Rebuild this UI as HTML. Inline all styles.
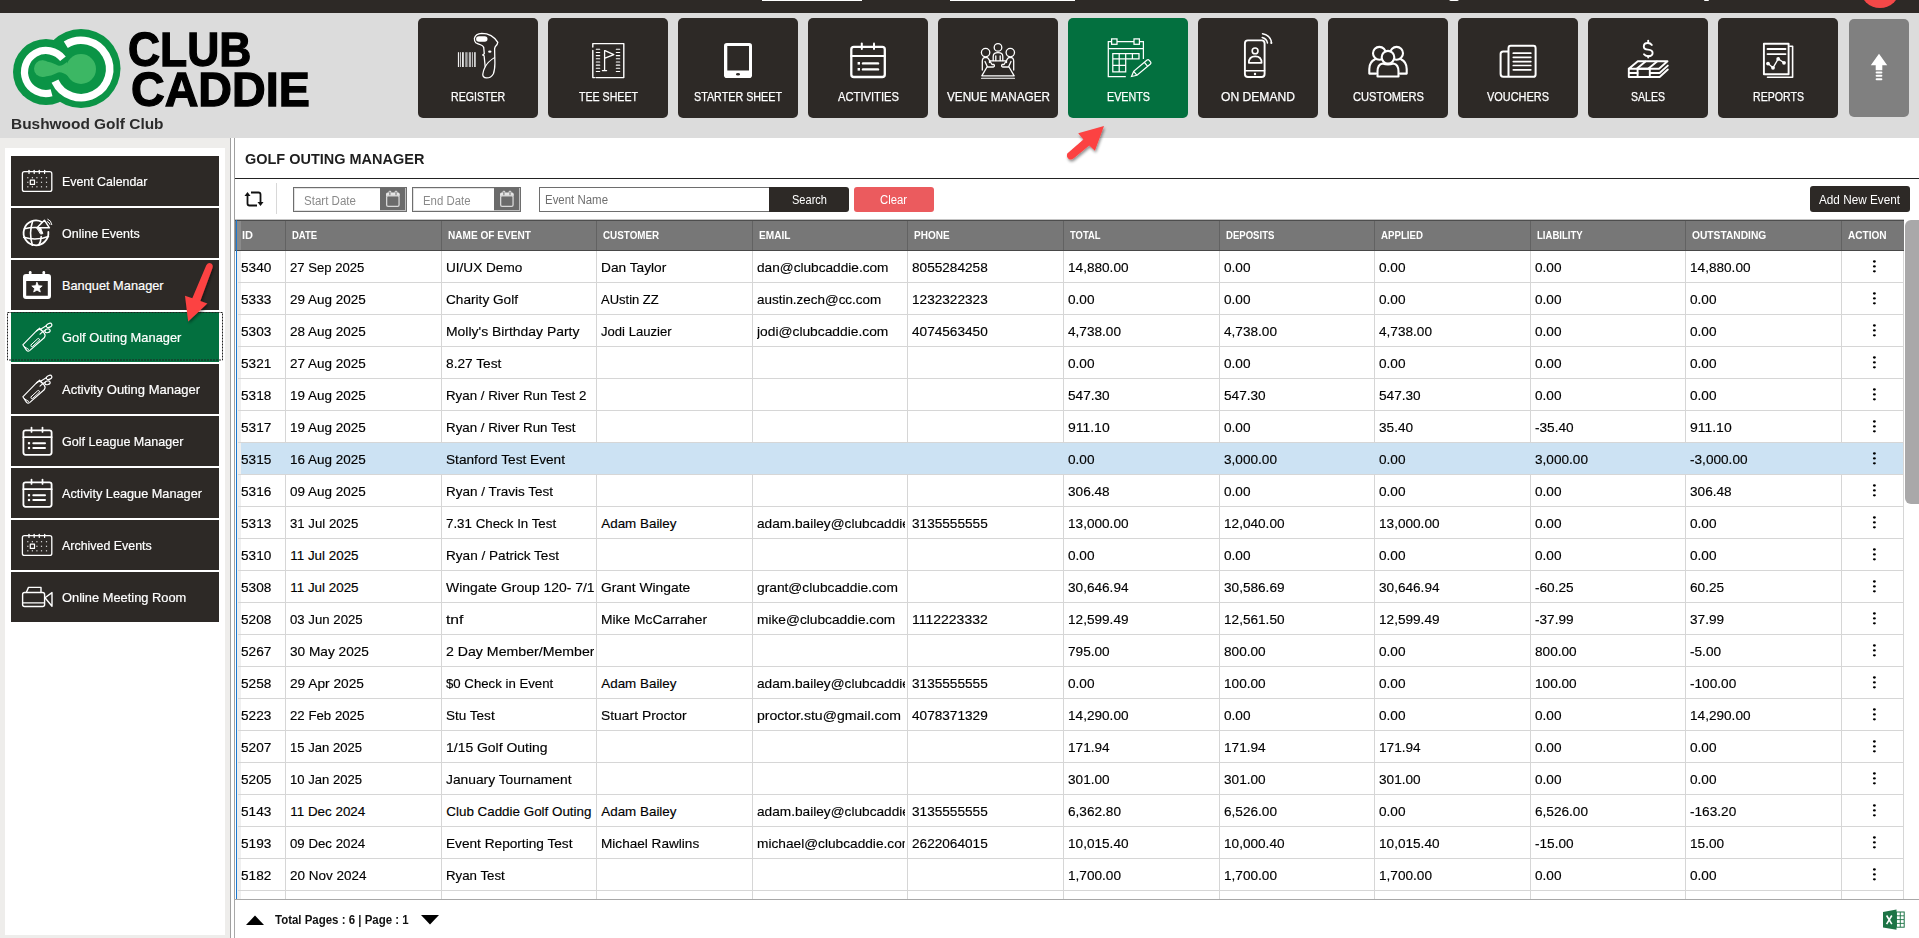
<!DOCTYPE html><html><head><meta charset="utf-8"><style>
html,body{margin:0;padding:0;width:1919px;height:938px;overflow:hidden;background:#fff;font-family:"Liberation Sans",sans-serif}
.r{position:absolute;box-sizing:border-box}
.t{position:absolute;white-space:nowrap;line-height:1;transform-origin:0 0}
</style></head><body>
<div class="r" style="left:0;top:0;width:1919px;height:13px;background:#2d2926"></div>
<div class="r" style="left:762px;top:0;width:100px;height:1px;background:#fff"></div>
<div class="r" style="left:950px;top:0;width:125px;height:1px;background:#fff"></div>
<div class="r" style="left:1449px;top:-1px;width:10px;height:2.2px;background:#fff;border-radius:0 0 4px 4px"></div>
<div class="r" style="left:1703.5px;top:-1px;width:5.5px;height:2.2px;background:#fff;border-radius:0 0 1px 1px"></div>
<div class="r" style="left:1860px;top:-32px;width:40px;height:40px;background:#f44848;border-radius:50%"></div>
<div class="r" style="left:0;top:13px;width:1919px;height:125px;background:#dcdcdc"></div>
<svg class="r" style="left:0;top:20px" width="130" height="95" viewBox="0 20 130 95">
<circle cx="46" cy="72" r="33" fill="#0b9446"/><circle cx="81" cy="68.5" r="39.5" fill="#0b9446"/>
<path d="M62.94 58.76 A21.5 21.5 0 1 0 51.56 92.77" fill="none" stroke="#fff" stroke-width="7.2"/>
<path d="M65.79 44.66 A28.7 28.7 0 1 1 54.99 81.13" fill="none" stroke="#fff" stroke-width="7.6"/>
<circle cx="81" cy="69" r="15" fill="#3cb764"/><circle cx="42.3" cy="68.6" r="8.3" fill="#3cb764"/>
<path d="M42 60.5 Q52 62 58 65.5 Q62 66.5 67 62 L68 76 Q62 71.5 58 72.5 Q52 76 42 77 Z" fill="#3cb764"/>
</svg>
<div class="t" style="left:128.20px;top:25.12px;font-size:49px;color:#000;font-weight:bold;transform:scaleX(0.9067);-webkit-text-stroke:1.3px #000;">CLUB</div>
<div class="t" style="left:130.60px;top:65.02px;font-size:49px;color:#000;font-weight:bold;transform:scaleX(0.9518);-webkit-text-stroke:1.3px #000;">CADDIE</div>
<div class="t" style="left:10.50px;top:116.30px;font-size:15px;color:#2b2b2b;font-weight:bold;transform:scaleX(1.0283);">Bushwood Golf Club</div>
<div class="r" style="left:418px;top:18px;width:120px;height:100px;background:#2d2926;border-radius:5px"></div>
<div class="t" style="left:450.85px;top:91.26px;font-size:12.8px;color:#fff;transform:scaleX(0.8299);-webkit-text-stroke:0.25px #fff;">REGISTER</div>
<div class="r" style="left:548px;top:18px;width:120px;height:100px;background:#2d2926;border-radius:5px"></div>
<div class="t" style="left:578.50px;top:91.26px;font-size:12.8px;color:#fff;transform:scaleX(0.8295);-webkit-text-stroke:0.25px #fff;">TEE SHEET</div>
<div class="r" style="left:678px;top:18px;width:120px;height:100px;background:#2d2926;border-radius:5px"></div>
<div class="t" style="left:694.00px;top:91.26px;font-size:12.8px;color:#fff;transform:scaleX(0.8398);-webkit-text-stroke:0.25px #fff;">STARTER SHEET</div>
<div class="r" style="left:808px;top:18px;width:120px;height:100px;background:#2d2926;border-radius:5px"></div>
<div class="t" style="left:837.50px;top:91.26px;font-size:12.8px;color:#fff;transform:scaleX(0.8752);-webkit-text-stroke:0.25px #fff;">ACTIVITIES</div>
<div class="r" style="left:938px;top:18px;width:120px;height:100px;background:#2d2926;border-radius:5px"></div>
<div class="t" style="left:946.50px;top:91.26px;font-size:12.8px;color:#fff;transform:scaleX(0.9165);-webkit-text-stroke:0.25px #fff;">VENUE MANAGER</div>
<div class="r" style="left:1068px;top:18px;width:120px;height:100px;background:#03703f;border-radius:5px"></div>
<div class="t" style="left:1106.50px;top:91.26px;font-size:12.8px;color:#fff;transform:scaleX(0.8396);-webkit-text-stroke:0.25px #fff;">EVENTS</div>
<div class="r" style="left:1198px;top:18px;width:120px;height:100px;background:#2d2926;border-radius:5px"></div>
<div class="t" style="left:1221.00px;top:91.26px;font-size:12.8px;color:#fff;transform:scaleX(0.9460);-webkit-text-stroke:0.25px #fff;">ON DEMAND</div>
<div class="r" style="left:1328px;top:18px;width:120px;height:100px;background:#2d2926;border-radius:5px"></div>
<div class="t" style="left:1352.50px;top:91.26px;font-size:12.8px;color:#fff;transform:scaleX(0.8706);-webkit-text-stroke:0.25px #fff;">CUSTOMERS</div>
<div class="r" style="left:1458px;top:18px;width:120px;height:100px;background:#2d2926;border-radius:5px"></div>
<div class="t" style="left:1487.00px;top:91.26px;font-size:12.8px;color:#fff;transform:scaleX(0.8546);-webkit-text-stroke:0.25px #fff;">VOUCHERS</div>
<div class="r" style="left:1588px;top:18px;width:120px;height:100px;background:#2d2926;border-radius:5px"></div>
<div class="t" style="left:1631.00px;top:91.26px;font-size:12.8px;color:#fff;transform:scaleX(0.8238);-webkit-text-stroke:0.25px #fff;">SALES</div>
<div class="r" style="left:1718px;top:18px;width:120px;height:100px;background:#2d2926;border-radius:5px"></div>
<div class="t" style="left:1752.50px;top:91.26px;font-size:12.8px;color:#fff;transform:scaleX(0.8273);-webkit-text-stroke:0.25px #fff;">REPORTS</div>
<div class="r" style="left:1849px;top:19px;width:60px;height:98px;background:#808080;border-radius:5px"></div>
<div class="r" style="left:0;top:138px;width:230px;height:800px;background:#eeedeb"></div>
<div class="r" style="left:5px;top:148px;width:220px;height:787px;background:#fff"></div>
<div class="r" style="left:11px;top:156px;width:208px;height:50px;background:#2d2926"></div>
<div class="t" style="left:61.90px;top:175.76px;font-size:12.8px;color:#fff;transform:scaleX(0.9679);-webkit-text-stroke:0.2px #fff;">Event Calendar</div>
<div class="r" style="left:11px;top:208px;width:208px;height:50px;background:#2d2926"></div>
<div class="t" style="left:61.90px;top:227.76px;font-size:12.8px;color:#fff;transform:scaleX(0.9750);-webkit-text-stroke:0.2px #fff;">Online Events</div>
<div class="r" style="left:11px;top:260px;width:208px;height:50px;background:#2d2926"></div>
<div class="t" style="left:61.90px;top:279.76px;font-size:12.8px;color:#fff;-webkit-text-stroke:0.2px #fff;">Banquet Manager</div>
<div class="r" style="left:11px;top:312px;width:208px;height:50px;background:#03703f"></div>
<div class="t" style="left:61.90px;top:331.76px;font-size:12.8px;color:#fff;transform:scaleX(1.0049);-webkit-text-stroke:0.2px #fff;">Golf Outing Manager</div>
<div class="r" style="left:11px;top:364px;width:208px;height:50px;background:#2d2926"></div>
<div class="t" style="left:61.90px;top:383.76px;font-size:12.8px;color:#fff;transform:scaleX(1.0156);-webkit-text-stroke:0.2px #fff;">Activity Outing Manager</div>
<div class="r" style="left:11px;top:416px;width:208px;height:50px;background:#2d2926"></div>
<div class="t" style="left:61.90px;top:435.76px;font-size:12.8px;color:#fff;transform:scaleX(0.9804);-webkit-text-stroke:0.2px #fff;">Golf League Manager</div>
<div class="r" style="left:11px;top:468px;width:208px;height:50px;background:#2d2926"></div>
<div class="t" style="left:61.90px;top:487.76px;font-size:12.8px;color:#fff;transform:scaleX(0.9937);-webkit-text-stroke:0.2px #fff;">Activity League Manager</div>
<div class="r" style="left:11px;top:520px;width:208px;height:50px;background:#2d2926"></div>
<div class="t" style="left:61.90px;top:539.76px;font-size:12.8px;color:#fff;transform:scaleX(0.9709);-webkit-text-stroke:0.2px #fff;">Archived Events</div>
<div class="r" style="left:11px;top:572px;width:208px;height:50px;background:#2d2926"></div>
<div class="t" style="left:61.90px;top:591.76px;font-size:12.8px;color:#fff;transform:scaleX(1.0041);-webkit-text-stroke:0.2px #fff;">Online Meeting Room</div>
<svg class="r" style="left:7px;top:312px" width="216" height="49" viewBox="0 0 216 49"><rect x="0.5" y="0.5" width="215" height="47.5" fill="none" stroke="#222" stroke-width="1" stroke-dasharray="2 1"/></svg>
<div class="r" style="left:230px;top:138px;width:5px;height:800px;border-left:1px solid #a0a0a0;border-right:1px solid #a0a0a0;background:#fff"></div>
<div class="r" style="left:235px;top:138px;width:1684px;height:800px;background:#fff"></div>
<div class="t" style="left:245.30px;top:151.80px;font-size:14.3px;color:#1e1e1e;font-weight:bold;transform:scaleX(1.0127);">GOLF OUTING MANAGER</div>
<div class="r" style="left:235px;top:178px;width:1684px;height:1px;background:#222"></div>
<div class="r" style="left:276px;top:183px;width:1px;height:31px;background:#d8d8d8"></div>
<div class="r" style="left:293px;top:187px;width:114px;height:25px;border:1px solid #6e6e6e;background:#fff"></div>
<div class="r" style="left:294px;top:188px;width:112px;height:23px;border:1px solid #e2e2e2"></div>
<div class="r" style="left:380px;top:188px;width:26px;height:23px;background:#6b6b6b;border-right:1px solid #c0c0c0;border-bottom:1px solid #c0c0c0"></div>
<svg class="r" style="left:380px;top:185px" width="26" height="26" viewBox="494 185 26 26"><path d="M500 196.2 V194.2 Q500 192.6 501.6 192.6 H512.1 Q513.7 192.6 513.7 194.2 V196.2 Z" fill="#e6e6e6"/><rect x="500.65" y="195.5" width="12.4" height="10.9" rx="1.4" fill="none" stroke="#d8d8d8" stroke-width="1.3"/><rect x="502.6" y="190.8" width="2.6" height="4.4" rx="1" fill="#e6e6e6"/><rect x="508.7" y="190.8" width="2.6" height="4.4" rx="1" fill="#e6e6e6"/><rect x="503.4" y="191.6" width="1" height="3.6" fill="#6b6b6b"/><rect x="509.5" y="191.6" width="1" height="3.6" fill="#6b6b6b"/></svg>
<div class="t" style="left:304.00px;top:195.42px;font-size:12.5px;color:#8a8a8a;transform:scaleX(0.9240);">Start Date</div>
<div class="r" style="left:412px;top:187px;width:109px;height:25px;border:1px solid #6e6e6e;background:#fff"></div>
<div class="r" style="left:413px;top:188px;width:107px;height:23px;border:1px solid #e2e2e2"></div>
<div class="r" style="left:494px;top:188px;width:26px;height:23px;background:#6b6b6b;border-right:1px solid #c0c0c0;border-bottom:1px solid #c0c0c0"></div>
<svg class="r" style="left:494px;top:185px" width="26" height="26" viewBox="494 185 26 26"><path d="M500 196.2 V194.2 Q500 192.6 501.6 192.6 H512.1 Q513.7 192.6 513.7 194.2 V196.2 Z" fill="#e6e6e6"/><rect x="500.65" y="195.5" width="12.4" height="10.9" rx="1.4" fill="none" stroke="#d8d8d8" stroke-width="1.3"/><rect x="502.6" y="190.8" width="2.6" height="4.4" rx="1" fill="#e6e6e6"/><rect x="508.7" y="190.8" width="2.6" height="4.4" rx="1" fill="#e6e6e6"/><rect x="503.4" y="191.6" width="1" height="3.6" fill="#6b6b6b"/><rect x="509.5" y="191.6" width="1" height="3.6" fill="#6b6b6b"/></svg>
<div class="t" style="left:423.00px;top:195.42px;font-size:12.5px;color:#8a8a8a;transform:scaleX(0.9114);">End Date</div>
<div class="r" style="left:539px;top:187px;width:232px;height:25px;border:1px solid #6e6e6e;background:#fff"></div>
<div class="t" style="left:545.00px;top:193.82px;font-size:12.5px;color:#6e6e6e;transform:scaleX(0.9159);">Event Name</div>
<div class="r" style="left:769px;top:187px;width:80px;height:25px;background:#2d2926;border-radius:0 3px 3px 0"></div>
<div class="t" style="left:791.50px;top:193.82px;font-size:12.5px;color:#fff;transform:scaleX(0.8837);">Search</div>
<div class="r" style="left:854px;top:187px;width:80px;height:25px;background:#eb5b5e;border-radius:3px"></div>
<div class="t" style="left:880.00px;top:193.82px;font-size:12.5px;color:#fff;transform:scaleX(0.9039);">Clear</div>
<div class="r" style="left:1810px;top:186px;width:100px;height:26px;background:#2d2926;border-radius:3px"></div>
<div class="t" style="left:1819.40px;top:193.72px;font-size:12.5px;color:#fff;transform:scaleX(0.9401);">Add New Event</div>
<svg class="r" style="left:243px;top:190px" width="22" height="18" viewBox="0 0 22 18"><path d="M4.5 5 V13.5 Q4.5 15.5 6.5 15.5 H14" fill="none" stroke="#111" stroke-width="1.8"/><path d="M17.5 13 V4.5 Q17.5 2.5 15.5 2.5 H8" fill="none" stroke="#111" stroke-width="1.8"/><path d="M1.5 6 L4.5 2 L7.5 6 Z" fill="#111"/><path d="M14.5 12 L17.5 16 L20.5 12 Z" fill="#111"/></svg>
<div class="r" style="left:235px;top:219px;width:1669px;height:1px;background:#c4c4c4"></div>
<div class="r" style="left:235px;top:220px;width:1669px;height:31px;background:#777;border-top:1px solid #4d4d4d;border-bottom:1px solid #474747"></div>
<div class="r" style="left:236px;top:220px;width:1px;height:679px;background:#1a78d2"></div>
<div class="r" style="left:237px;top:221px;width:4px;height:29px;background:#8a8a8a"></div>
<div class="r" style="left:237px;top:251px;width:4px;height:648px;background:#efefef"></div>
<div class="r" style="left:285px;top:221px;width:1px;height:29px;background:#626262"></div>
<div class="r" style="left:285px;top:251px;width:1px;height:648px;background:#d6d6d6"></div>
<div class="r" style="left:441px;top:221px;width:1px;height:29px;background:#626262"></div>
<div class="r" style="left:441px;top:251px;width:1px;height:648px;background:#d6d6d6"></div>
<div class="r" style="left:596px;top:221px;width:1px;height:29px;background:#626262"></div>
<div class="r" style="left:596px;top:251px;width:1px;height:648px;background:#d6d6d6"></div>
<div class="r" style="left:752px;top:221px;width:1px;height:29px;background:#626262"></div>
<div class="r" style="left:752px;top:251px;width:1px;height:648px;background:#d6d6d6"></div>
<div class="r" style="left:907px;top:221px;width:1px;height:29px;background:#626262"></div>
<div class="r" style="left:907px;top:251px;width:1px;height:648px;background:#d6d6d6"></div>
<div class="r" style="left:1063px;top:221px;width:1px;height:29px;background:#626262"></div>
<div class="r" style="left:1063px;top:251px;width:1px;height:648px;background:#d6d6d6"></div>
<div class="r" style="left:1219px;top:221px;width:1px;height:29px;background:#626262"></div>
<div class="r" style="left:1219px;top:251px;width:1px;height:648px;background:#d6d6d6"></div>
<div class="r" style="left:1374px;top:221px;width:1px;height:29px;background:#626262"></div>
<div class="r" style="left:1374px;top:251px;width:1px;height:648px;background:#d6d6d6"></div>
<div class="r" style="left:1530px;top:221px;width:1px;height:29px;background:#626262"></div>
<div class="r" style="left:1530px;top:251px;width:1px;height:648px;background:#d6d6d6"></div>
<div class="r" style="left:1685px;top:221px;width:1px;height:29px;background:#626262"></div>
<div class="r" style="left:1685px;top:251px;width:1px;height:648px;background:#d6d6d6"></div>
<div class="r" style="left:1841px;top:221px;width:1px;height:29px;background:#626262"></div>
<div class="r" style="left:1841px;top:251px;width:1px;height:648px;background:#d6d6d6"></div>
<div class="r" style="left:1903px;top:251px;width:1px;height:648px;background:#d6d6d6"></div>
<div class="t" style="left:242.00px;top:229.72px;font-size:11.2px;color:#fff;font-weight:bold;transform:scaleX(0.9821);">ID</div>
<div class="t" style="left:292.20px;top:229.72px;font-size:11.2px;color:#fff;font-weight:bold;transform:scaleX(0.8497);">DATE</div>
<div class="t" style="left:447.60px;top:229.72px;font-size:11.2px;color:#fff;font-weight:bold;transform:scaleX(0.9012);">NAME OF EVENT</div>
<div class="t" style="left:603.40px;top:229.72px;font-size:11.2px;color:#fff;font-weight:bold;transform:scaleX(0.8812);">CUSTOMER</div>
<div class="t" style="left:758.90px;top:229.72px;font-size:11.2px;color:#fff;font-weight:bold;transform:scaleX(0.9041);">EMAIL</div>
<div class="t" style="left:914.40px;top:229.72px;font-size:11.2px;color:#fff;font-weight:bold;transform:scaleX(0.8938);">PHONE</div>
<div class="t" style="left:1070.00px;top:229.72px;font-size:11.2px;color:#fff;font-weight:bold;transform:scaleX(0.8432);">TOTAL</div>
<div class="t" style="left:1225.70px;top:229.72px;font-size:11.2px;color:#fff;font-weight:bold;transform:scaleX(0.8546);">DEPOSITS</div>
<div class="t" style="left:1381.00px;top:229.72px;font-size:11.2px;color:#fff;font-weight:bold;transform:scaleX(0.8652);">APPLIED</div>
<div class="t" style="left:1536.70px;top:229.72px;font-size:11.2px;color:#fff;font-weight:bold;transform:scaleX(0.8560);">LIABILITY</div>
<div class="t" style="left:1692.00px;top:229.72px;font-size:11.2px;color:#fff;font-weight:bold;transform:scaleX(0.9151);">OUTSTANDING</div>
<div class="t" style="left:1847.80px;top:229.72px;font-size:11.2px;color:#fff;font-weight:bold;transform:scaleX(0.9015);">ACTION</div>
<div class="r" style="left:238px;top:282px;width:1666px;height:1px;background:#d6d6d6"></div>
<div class="r" style="left:241px;top:251px;width:42px;height:31px;overflow:hidden"><div class="t" style="left:0.00px;top:9.66px;font-size:13.4px;color:#000;transform:scaleX(1.0170);-webkit-text-stroke:0.15px #000;">5340</div></div>
<div class="r" style="left:290.3px;top:251px;width:148.7px;height:31px;overflow:hidden"><div class="t" style="left:0.00px;top:9.66px;font-size:13.4px;color:#000;transform:scaleX(0.9788);-webkit-text-stroke:0.15px #000;">27 Sep 2025</div></div>
<div class="r" style="left:446.3px;top:251px;width:147.7px;height:31px;overflow:hidden"><div class="t" style="left:0.00px;top:9.66px;font-size:13.4px;color:#000;transform:scaleX(1.0150);-webkit-text-stroke:0.15px #000;">UI/UX Demo</div></div>
<div class="r" style="left:601.3px;top:251px;width:148.70000000000005px;height:31px;overflow:hidden"><div class="t" style="left:0.00px;top:9.66px;font-size:13.4px;color:#000;transform:scaleX(1.0236);-webkit-text-stroke:0.15px #000;">Dan Taylor</div></div>
<div class="r" style="left:757.3px;top:251px;width:147.70000000000005px;height:31px;overflow:hidden"><div class="t" style="left:0.00px;top:9.66px;font-size:13.4px;color:#000;transform:scaleX(1.0195);-webkit-text-stroke:0.15px #000;">dan@clubcaddie.com</div></div>
<div class="r" style="left:912.3px;top:251px;width:148.70000000000005px;height:31px;overflow:hidden"><div class="t" style="left:0.00px;top:9.66px;font-size:13.4px;color:#000;transform:scaleX(1.0170);-webkit-text-stroke:0.15px #000;">8055284258</div></div>
<div class="r" style="left:1068.3px;top:251px;width:148.70000000000005px;height:31px;overflow:hidden"><div class="t" style="left:0.00px;top:9.66px;font-size:13.4px;color:#000;transform:scaleX(1.0159);-webkit-text-stroke:0.15px #000;">14,880.00</div></div>
<div class="r" style="left:1224.3px;top:251px;width:147.70000000000005px;height:31px;overflow:hidden"><div class="t" style="left:0.00px;top:9.66px;font-size:13.4px;color:#000;transform:scaleX(1.0163);-webkit-text-stroke:0.15px #000;">0.00</div></div>
<div class="r" style="left:1379.3px;top:251px;width:148.70000000000005px;height:31px;overflow:hidden"><div class="t" style="left:0.00px;top:9.66px;font-size:13.4px;color:#000;transform:scaleX(1.0163);-webkit-text-stroke:0.15px #000;">0.00</div></div>
<div class="r" style="left:1535.3px;top:251px;width:147.70000000000005px;height:31px;overflow:hidden"><div class="t" style="left:0.00px;top:9.66px;font-size:13.4px;color:#000;transform:scaleX(1.0163);-webkit-text-stroke:0.15px #000;">0.00</div></div>
<div class="r" style="left:1690.3px;top:251px;width:148.70000000000005px;height:31px;overflow:hidden"><div class="t" style="left:0.00px;top:9.66px;font-size:13.4px;color:#000;transform:scaleX(1.0159);-webkit-text-stroke:0.15px #000;">14,880.00</div></div>
<svg class="r" style="left:1872px;top:259px" width="5" height="15" viewBox="0 0 5 15"><ellipse cx="2.4" cy="2.5" rx="1.5" ry="1.15" fill="#000"/><ellipse cx="2.4" cy="7.4" rx="1.5" ry="1.15" fill="#000"/><ellipse cx="2.4" cy="12.3" rx="1.5" ry="1.15" fill="#000"/></svg>
<div class="r" style="left:238px;top:314px;width:1666px;height:1px;background:#d6d6d6"></div>
<div class="r" style="left:241px;top:283px;width:42px;height:31px;overflow:hidden"><div class="t" style="left:0.00px;top:9.66px;font-size:13.4px;color:#000;transform:scaleX(1.0170);-webkit-text-stroke:0.15px #000;">5333</div></div>
<div class="r" style="left:290.3px;top:283px;width:148.7px;height:31px;overflow:hidden"><div class="t" style="left:0.00px;top:9.66px;font-size:13.4px;color:#000;transform:scaleX(1.0068);-webkit-text-stroke:0.15px #000;">29 Aug 2025</div></div>
<div class="r" style="left:446.3px;top:283px;width:147.7px;height:31px;overflow:hidden"><div class="t" style="left:0.00px;top:9.66px;font-size:13.4px;color:#000;transform:scaleX(1.0188);-webkit-text-stroke:0.15px #000;">Charity Golf</div></div>
<div class="r" style="left:601.3px;top:283px;width:148.70000000000005px;height:31px;overflow:hidden"><div class="t" style="left:0.00px;top:9.66px;font-size:13.4px;color:#000;transform:scaleX(0.9696);-webkit-text-stroke:0.15px #000;">AUstin ZZ</div></div>
<div class="r" style="left:757.3px;top:283px;width:147.70000000000005px;height:31px;overflow:hidden"><div class="t" style="left:0.00px;top:9.66px;font-size:13.4px;color:#000;transform:scaleX(1.0039);-webkit-text-stroke:0.15px #000;">austin.zech@cc.com</div></div>
<div class="r" style="left:912.3px;top:283px;width:148.70000000000005px;height:31px;overflow:hidden"><div class="t" style="left:0.00px;top:9.66px;font-size:13.4px;color:#000;transform:scaleX(1.0170);-webkit-text-stroke:0.15px #000;">1232322323</div></div>
<div class="r" style="left:1068.3px;top:283px;width:148.70000000000005px;height:31px;overflow:hidden"><div class="t" style="left:0.00px;top:9.66px;font-size:13.4px;color:#000;transform:scaleX(1.0163);-webkit-text-stroke:0.15px #000;">0.00</div></div>
<div class="r" style="left:1224.3px;top:283px;width:147.70000000000005px;height:31px;overflow:hidden"><div class="t" style="left:0.00px;top:9.66px;font-size:13.4px;color:#000;transform:scaleX(1.0163);-webkit-text-stroke:0.15px #000;">0.00</div></div>
<div class="r" style="left:1379.3px;top:283px;width:148.70000000000005px;height:31px;overflow:hidden"><div class="t" style="left:0.00px;top:9.66px;font-size:13.4px;color:#000;transform:scaleX(1.0163);-webkit-text-stroke:0.15px #000;">0.00</div></div>
<div class="r" style="left:1535.3px;top:283px;width:147.70000000000005px;height:31px;overflow:hidden"><div class="t" style="left:0.00px;top:9.66px;font-size:13.4px;color:#000;transform:scaleX(1.0163);-webkit-text-stroke:0.15px #000;">0.00</div></div>
<div class="r" style="left:1690.3px;top:283px;width:148.70000000000005px;height:31px;overflow:hidden"><div class="t" style="left:0.00px;top:9.66px;font-size:13.4px;color:#000;transform:scaleX(1.0163);-webkit-text-stroke:0.15px #000;">0.00</div></div>
<svg class="r" style="left:1872px;top:291px" width="5" height="15" viewBox="0 0 5 15"><ellipse cx="2.4" cy="2.5" rx="1.5" ry="1.15" fill="#000"/><ellipse cx="2.4" cy="7.4" rx="1.5" ry="1.15" fill="#000"/><ellipse cx="2.4" cy="12.3" rx="1.5" ry="1.15" fill="#000"/></svg>
<div class="r" style="left:238px;top:346px;width:1666px;height:1px;background:#d6d6d6"></div>
<div class="r" style="left:241px;top:315px;width:42px;height:31px;overflow:hidden"><div class="t" style="left:0.00px;top:9.66px;font-size:13.4px;color:#000;transform:scaleX(1.0170);-webkit-text-stroke:0.15px #000;">5303</div></div>
<div class="r" style="left:290.3px;top:315px;width:148.7px;height:31px;overflow:hidden"><div class="t" style="left:0.00px;top:9.66px;font-size:13.4px;color:#000;transform:scaleX(1.0068);-webkit-text-stroke:0.15px #000;">28 Aug 2025</div></div>
<div class="r" style="left:446.3px;top:315px;width:147.7px;height:31px;overflow:hidden"><div class="t" style="left:0.00px;top:9.66px;font-size:13.4px;color:#000;transform:scaleX(1.0396);-webkit-text-stroke:0.15px #000;">Molly's Birthday Party</div></div>
<div class="r" style="left:601.3px;top:315px;width:148.70000000000005px;height:31px;overflow:hidden"><div class="t" style="left:0.00px;top:9.66px;font-size:13.4px;color:#000;transform:scaleX(0.9768);-webkit-text-stroke:0.15px #000;">Jodi Lauzier</div></div>
<div class="r" style="left:757.3px;top:315px;width:147.70000000000005px;height:31px;overflow:hidden"><div class="t" style="left:0.00px;top:9.66px;font-size:13.4px;color:#000;transform:scaleX(1.0304);-webkit-text-stroke:0.15px #000;">jodi@clubcaddie.com</div></div>
<div class="r" style="left:912.3px;top:315px;width:148.70000000000005px;height:31px;overflow:hidden"><div class="t" style="left:0.00px;top:9.66px;font-size:13.4px;color:#000;transform:scaleX(1.0170);-webkit-text-stroke:0.15px #000;">4074563450</div></div>
<div class="r" style="left:1068.3px;top:315px;width:148.70000000000005px;height:31px;overflow:hidden"><div class="t" style="left:0.00px;top:9.66px;font-size:13.4px;color:#000;transform:scaleX(1.0157);-webkit-text-stroke:0.15px #000;">4,738.00</div></div>
<div class="r" style="left:1224.3px;top:315px;width:147.70000000000005px;height:31px;overflow:hidden"><div class="t" style="left:0.00px;top:9.66px;font-size:13.4px;color:#000;transform:scaleX(1.0157);-webkit-text-stroke:0.15px #000;">4,738.00</div></div>
<div class="r" style="left:1379.3px;top:315px;width:148.70000000000005px;height:31px;overflow:hidden"><div class="t" style="left:0.00px;top:9.66px;font-size:13.4px;color:#000;transform:scaleX(1.0157);-webkit-text-stroke:0.15px #000;">4,738.00</div></div>
<div class="r" style="left:1535.3px;top:315px;width:147.70000000000005px;height:31px;overflow:hidden"><div class="t" style="left:0.00px;top:9.66px;font-size:13.4px;color:#000;transform:scaleX(1.0163);-webkit-text-stroke:0.15px #000;">0.00</div></div>
<div class="r" style="left:1690.3px;top:315px;width:148.70000000000005px;height:31px;overflow:hidden"><div class="t" style="left:0.00px;top:9.66px;font-size:13.4px;color:#000;transform:scaleX(1.0163);-webkit-text-stroke:0.15px #000;">0.00</div></div>
<svg class="r" style="left:1872px;top:323px" width="5" height="15" viewBox="0 0 5 15"><ellipse cx="2.4" cy="2.5" rx="1.5" ry="1.15" fill="#000"/><ellipse cx="2.4" cy="7.4" rx="1.5" ry="1.15" fill="#000"/><ellipse cx="2.4" cy="12.3" rx="1.5" ry="1.15" fill="#000"/></svg>
<div class="r" style="left:238px;top:378px;width:1666px;height:1px;background:#d6d6d6"></div>
<div class="r" style="left:241px;top:347px;width:42px;height:31px;overflow:hidden"><div class="t" style="left:0.00px;top:9.66px;font-size:13.4px;color:#000;transform:scaleX(1.0170);-webkit-text-stroke:0.15px #000;">5321</div></div>
<div class="r" style="left:290.3px;top:347px;width:148.7px;height:31px;overflow:hidden"><div class="t" style="left:0.00px;top:9.66px;font-size:13.4px;color:#000;transform:scaleX(1.0068);-webkit-text-stroke:0.15px #000;">27 Aug 2025</div></div>
<div class="r" style="left:446.3px;top:347px;width:147.7px;height:31px;overflow:hidden"><div class="t" style="left:0.00px;top:9.66px;font-size:13.4px;color:#000;transform:scaleX(1.0245);-webkit-text-stroke:0.15px #000;">8.27 Test</div></div>
<div class="r" style="left:1068.3px;top:347px;width:148.70000000000005px;height:31px;overflow:hidden"><div class="t" style="left:0.00px;top:9.66px;font-size:13.4px;color:#000;transform:scaleX(1.0163);-webkit-text-stroke:0.15px #000;">0.00</div></div>
<div class="r" style="left:1224.3px;top:347px;width:147.70000000000005px;height:31px;overflow:hidden"><div class="t" style="left:0.00px;top:9.66px;font-size:13.4px;color:#000;transform:scaleX(1.0163);-webkit-text-stroke:0.15px #000;">0.00</div></div>
<div class="r" style="left:1379.3px;top:347px;width:148.70000000000005px;height:31px;overflow:hidden"><div class="t" style="left:0.00px;top:9.66px;font-size:13.4px;color:#000;transform:scaleX(1.0163);-webkit-text-stroke:0.15px #000;">0.00</div></div>
<div class="r" style="left:1535.3px;top:347px;width:147.70000000000005px;height:31px;overflow:hidden"><div class="t" style="left:0.00px;top:9.66px;font-size:13.4px;color:#000;transform:scaleX(1.0163);-webkit-text-stroke:0.15px #000;">0.00</div></div>
<div class="r" style="left:1690.3px;top:347px;width:148.70000000000005px;height:31px;overflow:hidden"><div class="t" style="left:0.00px;top:9.66px;font-size:13.4px;color:#000;transform:scaleX(1.0163);-webkit-text-stroke:0.15px #000;">0.00</div></div>
<svg class="r" style="left:1872px;top:355px" width="5" height="15" viewBox="0 0 5 15"><ellipse cx="2.4" cy="2.5" rx="1.5" ry="1.15" fill="#000"/><ellipse cx="2.4" cy="7.4" rx="1.5" ry="1.15" fill="#000"/><ellipse cx="2.4" cy="12.3" rx="1.5" ry="1.15" fill="#000"/></svg>
<div class="r" style="left:238px;top:410px;width:1666px;height:1px;background:#d6d6d6"></div>
<div class="r" style="left:241px;top:379px;width:42px;height:31px;overflow:hidden"><div class="t" style="left:0.00px;top:9.66px;font-size:13.4px;color:#000;transform:scaleX(1.0170);-webkit-text-stroke:0.15px #000;">5318</div></div>
<div class="r" style="left:290.3px;top:379px;width:148.7px;height:31px;overflow:hidden"><div class="t" style="left:0.00px;top:9.66px;font-size:13.4px;color:#000;transform:scaleX(1.0068);-webkit-text-stroke:0.15px #000;">19 Aug 2025</div></div>
<div class="r" style="left:446.3px;top:379px;width:147.7px;height:31px;overflow:hidden"><div class="t" style="left:0.00px;top:9.66px;font-size:13.4px;color:#000;transform:scaleX(0.9946);-webkit-text-stroke:0.15px #000;">Ryan / River Run Test 2</div></div>
<div class="r" style="left:1068.3px;top:379px;width:148.70000000000005px;height:31px;overflow:hidden"><div class="t" style="left:0.00px;top:9.66px;font-size:13.4px;color:#000;transform:scaleX(1.0166);-webkit-text-stroke:0.15px #000;">547.30</div></div>
<div class="r" style="left:1224.3px;top:379px;width:147.70000000000005px;height:31px;overflow:hidden"><div class="t" style="left:0.00px;top:9.66px;font-size:13.4px;color:#000;transform:scaleX(1.0166);-webkit-text-stroke:0.15px #000;">547.30</div></div>
<div class="r" style="left:1379.3px;top:379px;width:148.70000000000005px;height:31px;overflow:hidden"><div class="t" style="left:0.00px;top:9.66px;font-size:13.4px;color:#000;transform:scaleX(1.0166);-webkit-text-stroke:0.15px #000;">547.30</div></div>
<div class="r" style="left:1535.3px;top:379px;width:147.70000000000005px;height:31px;overflow:hidden"><div class="t" style="left:0.00px;top:9.66px;font-size:13.4px;color:#000;transform:scaleX(1.0163);-webkit-text-stroke:0.15px #000;">0.00</div></div>
<div class="r" style="left:1690.3px;top:379px;width:148.70000000000005px;height:31px;overflow:hidden"><div class="t" style="left:0.00px;top:9.66px;font-size:13.4px;color:#000;transform:scaleX(1.0163);-webkit-text-stroke:0.15px #000;">0.00</div></div>
<svg class="r" style="left:1872px;top:387px" width="5" height="15" viewBox="0 0 5 15"><ellipse cx="2.4" cy="2.5" rx="1.5" ry="1.15" fill="#000"/><ellipse cx="2.4" cy="7.4" rx="1.5" ry="1.15" fill="#000"/><ellipse cx="2.4" cy="12.3" rx="1.5" ry="1.15" fill="#000"/></svg>
<div class="r" style="left:238px;top:442px;width:1666px;height:1px;background:#d6d6d6"></div>
<div class="r" style="left:241px;top:411px;width:42px;height:31px;overflow:hidden"><div class="t" style="left:0.00px;top:9.66px;font-size:13.4px;color:#000;transform:scaleX(1.0170);-webkit-text-stroke:0.15px #000;">5317</div></div>
<div class="r" style="left:290.3px;top:411px;width:148.7px;height:31px;overflow:hidden"><div class="t" style="left:0.00px;top:9.66px;font-size:13.4px;color:#000;transform:scaleX(1.0068);-webkit-text-stroke:0.15px #000;">19 Aug 2025</div></div>
<div class="r" style="left:446.3px;top:411px;width:147.7px;height:31px;overflow:hidden"><div class="t" style="left:0.00px;top:9.66px;font-size:13.4px;color:#000;transform:scaleX(0.9958);-webkit-text-stroke:0.15px #000;">Ryan / River Run Test</div></div>
<div class="r" style="left:1068.3px;top:411px;width:148.70000000000005px;height:31px;overflow:hidden"><div class="t" style="left:0.00px;top:9.66px;font-size:13.4px;color:#000;transform:scaleX(1.0419);-webkit-text-stroke:0.15px #000;">911.10</div></div>
<div class="r" style="left:1224.3px;top:411px;width:147.70000000000005px;height:31px;overflow:hidden"><div class="t" style="left:0.00px;top:9.66px;font-size:13.4px;color:#000;transform:scaleX(1.0163);-webkit-text-stroke:0.15px #000;">0.00</div></div>
<div class="r" style="left:1379.3px;top:411px;width:148.70000000000005px;height:31px;overflow:hidden"><div class="t" style="left:0.00px;top:9.66px;font-size:13.4px;color:#000;transform:scaleX(1.0165);-webkit-text-stroke:0.15px #000;">35.40</div></div>
<div class="r" style="left:1535.3px;top:411px;width:147.70000000000005px;height:31px;overflow:hidden"><div class="t" style="left:0.00px;top:9.66px;font-size:13.4px;color:#000;transform:scaleX(1.0175);-webkit-text-stroke:0.15px #000;">-35.40</div></div>
<div class="r" style="left:1690.3px;top:411px;width:148.70000000000005px;height:31px;overflow:hidden"><div class="t" style="left:0.00px;top:9.66px;font-size:13.4px;color:#000;transform:scaleX(1.0419);-webkit-text-stroke:0.15px #000;">911.10</div></div>
<svg class="r" style="left:1872px;top:419px" width="5" height="15" viewBox="0 0 5 15"><ellipse cx="2.4" cy="2.5" rx="1.5" ry="1.15" fill="#000"/><ellipse cx="2.4" cy="7.4" rx="1.5" ry="1.15" fill="#000"/><ellipse cx="2.4" cy="12.3" rx="1.5" ry="1.15" fill="#000"/></svg>
<div class="r" style="left:241px;top:443px;width:1662px;height:31px;background:#cce2f3"></div>
<div class="r" style="left:238px;top:474px;width:1666px;height:1px;background:#d6d6d6"></div>
<div class="r" style="left:241px;top:443px;width:42px;height:31px;overflow:hidden"><div class="t" style="left:0.00px;top:9.66px;font-size:13.4px;color:#000;transform:scaleX(1.0170);-webkit-text-stroke:0.15px #000;">5315</div></div>
<div class="r" style="left:290.3px;top:443px;width:148.7px;height:31px;overflow:hidden"><div class="t" style="left:0.00px;top:9.66px;font-size:13.4px;color:#000;transform:scaleX(1.0068);-webkit-text-stroke:0.15px #000;">16 Aug 2025</div></div>
<div class="r" style="left:446.3px;top:443px;width:147.7px;height:31px;overflow:hidden"><div class="t" style="left:0.00px;top:9.66px;font-size:13.4px;color:#000;transform:scaleX(1.0203);-webkit-text-stroke:0.15px #000;">Stanford Test Event</div></div>
<div class="r" style="left:1068.3px;top:443px;width:148.70000000000005px;height:31px;overflow:hidden"><div class="t" style="left:0.00px;top:9.66px;font-size:13.4px;color:#000;transform:scaleX(1.0163);-webkit-text-stroke:0.15px #000;">0.00</div></div>
<div class="r" style="left:1224.3px;top:443px;width:147.70000000000005px;height:31px;overflow:hidden"><div class="t" style="left:0.00px;top:9.66px;font-size:13.4px;color:#000;transform:scaleX(1.0157);-webkit-text-stroke:0.15px #000;">3,000.00</div></div>
<div class="r" style="left:1379.3px;top:443px;width:148.70000000000005px;height:31px;overflow:hidden"><div class="t" style="left:0.00px;top:9.66px;font-size:13.4px;color:#000;transform:scaleX(1.0163);-webkit-text-stroke:0.15px #000;">0.00</div></div>
<div class="r" style="left:1535.3px;top:443px;width:147.70000000000005px;height:31px;overflow:hidden"><div class="t" style="left:0.00px;top:9.66px;font-size:13.4px;color:#000;transform:scaleX(1.0157);-webkit-text-stroke:0.15px #000;">3,000.00</div></div>
<div class="r" style="left:1690.3px;top:443px;width:148.70000000000005px;height:31px;overflow:hidden"><div class="t" style="left:0.00px;top:9.66px;font-size:13.4px;color:#000;transform:scaleX(1.0165);-webkit-text-stroke:0.15px #000;">-3,000.00</div></div>
<svg class="r" style="left:1872px;top:451px" width="5" height="15" viewBox="0 0 5 15"><ellipse cx="2.4" cy="2.5" rx="1.5" ry="1.15" fill="#000"/><ellipse cx="2.4" cy="7.4" rx="1.5" ry="1.15" fill="#000"/><ellipse cx="2.4" cy="12.3" rx="1.5" ry="1.15" fill="#000"/></svg>
<div class="r" style="left:238px;top:506px;width:1666px;height:1px;background:#d6d6d6"></div>
<div class="r" style="left:241px;top:475px;width:42px;height:31px;overflow:hidden"><div class="t" style="left:0.00px;top:9.66px;font-size:13.4px;color:#000;transform:scaleX(1.0170);-webkit-text-stroke:0.15px #000;">5316</div></div>
<div class="r" style="left:290.3px;top:475px;width:148.7px;height:31px;overflow:hidden"><div class="t" style="left:0.00px;top:9.66px;font-size:13.4px;color:#000;transform:scaleX(1.0068);-webkit-text-stroke:0.15px #000;">09 Aug 2025</div></div>
<div class="r" style="left:446.3px;top:475px;width:147.7px;height:31px;overflow:hidden"><div class="t" style="left:0.00px;top:9.66px;font-size:13.4px;color:#000;transform:scaleX(1.0078);-webkit-text-stroke:0.15px #000;">Ryan / Travis Test</div></div>
<div class="r" style="left:1068.3px;top:475px;width:148.70000000000005px;height:31px;overflow:hidden"><div class="t" style="left:0.00px;top:9.66px;font-size:13.4px;color:#000;transform:scaleX(1.0166);-webkit-text-stroke:0.15px #000;">306.48</div></div>
<div class="r" style="left:1224.3px;top:475px;width:147.70000000000005px;height:31px;overflow:hidden"><div class="t" style="left:0.00px;top:9.66px;font-size:13.4px;color:#000;transform:scaleX(1.0163);-webkit-text-stroke:0.15px #000;">0.00</div></div>
<div class="r" style="left:1379.3px;top:475px;width:148.70000000000005px;height:31px;overflow:hidden"><div class="t" style="left:0.00px;top:9.66px;font-size:13.4px;color:#000;transform:scaleX(1.0163);-webkit-text-stroke:0.15px #000;">0.00</div></div>
<div class="r" style="left:1535.3px;top:475px;width:147.70000000000005px;height:31px;overflow:hidden"><div class="t" style="left:0.00px;top:9.66px;font-size:13.4px;color:#000;transform:scaleX(1.0163);-webkit-text-stroke:0.15px #000;">0.00</div></div>
<div class="r" style="left:1690.3px;top:475px;width:148.70000000000005px;height:31px;overflow:hidden"><div class="t" style="left:0.00px;top:9.66px;font-size:13.4px;color:#000;transform:scaleX(1.0166);-webkit-text-stroke:0.15px #000;">306.48</div></div>
<svg class="r" style="left:1872px;top:483px" width="5" height="15" viewBox="0 0 5 15"><ellipse cx="2.4" cy="2.5" rx="1.5" ry="1.15" fill="#000"/><ellipse cx="2.4" cy="7.4" rx="1.5" ry="1.15" fill="#000"/><ellipse cx="2.4" cy="12.3" rx="1.5" ry="1.15" fill="#000"/></svg>
<div class="r" style="left:238px;top:538px;width:1666px;height:1px;background:#d6d6d6"></div>
<div class="r" style="left:241px;top:507px;width:42px;height:31px;overflow:hidden"><div class="t" style="left:0.00px;top:9.66px;font-size:13.4px;color:#000;transform:scaleX(1.0170);-webkit-text-stroke:0.15px #000;">5313</div></div>
<div class="r" style="left:290.3px;top:507px;width:148.7px;height:31px;overflow:hidden"><div class="t" style="left:0.00px;top:9.66px;font-size:13.4px;color:#000;transform:scaleX(0.9854);-webkit-text-stroke:0.15px #000;">31 Jul 2025</div></div>
<div class="r" style="left:446.3px;top:507px;width:147.7px;height:31px;overflow:hidden"><div class="t" style="left:0.00px;top:9.66px;font-size:13.4px;color:#000;transform:scaleX(0.9954);-webkit-text-stroke:0.15px #000;">7.31 Check In Test</div></div>
<div class="r" style="left:601.3px;top:507px;width:148.70000000000005px;height:31px;overflow:hidden"><div class="t" style="left:0.00px;top:9.66px;font-size:13.4px;color:#000;-webkit-text-stroke:0.15px #000;">Adam Bailey</div></div>
<div class="r" style="left:757.3px;top:507px;width:147.70000000000005px;height:31px;overflow:hidden"><div class="t" style="left:0.00px;top:9.66px;font-size:13.4px;color:#000;transform:scaleX(1.0208);-webkit-text-stroke:0.15px #000;">adam.bailey@clubcaddie.com</div></div>
<div class="r" style="left:912.3px;top:507px;width:148.70000000000005px;height:31px;overflow:hidden"><div class="t" style="left:0.00px;top:9.66px;font-size:13.4px;color:#000;transform:scaleX(1.0170);-webkit-text-stroke:0.15px #000;">3135555555</div></div>
<div class="r" style="left:1068.3px;top:507px;width:148.70000000000005px;height:31px;overflow:hidden"><div class="t" style="left:0.00px;top:9.66px;font-size:13.4px;color:#000;transform:scaleX(1.0159);-webkit-text-stroke:0.15px #000;">13,000.00</div></div>
<div class="r" style="left:1224.3px;top:507px;width:147.70000000000005px;height:31px;overflow:hidden"><div class="t" style="left:0.00px;top:9.66px;font-size:13.4px;color:#000;transform:scaleX(1.0159);-webkit-text-stroke:0.15px #000;">12,040.00</div></div>
<div class="r" style="left:1379.3px;top:507px;width:148.70000000000005px;height:31px;overflow:hidden"><div class="t" style="left:0.00px;top:9.66px;font-size:13.4px;color:#000;transform:scaleX(1.0159);-webkit-text-stroke:0.15px #000;">13,000.00</div></div>
<div class="r" style="left:1535.3px;top:507px;width:147.70000000000005px;height:31px;overflow:hidden"><div class="t" style="left:0.00px;top:9.66px;font-size:13.4px;color:#000;transform:scaleX(1.0163);-webkit-text-stroke:0.15px #000;">0.00</div></div>
<div class="r" style="left:1690.3px;top:507px;width:148.70000000000005px;height:31px;overflow:hidden"><div class="t" style="left:0.00px;top:9.66px;font-size:13.4px;color:#000;transform:scaleX(1.0163);-webkit-text-stroke:0.15px #000;">0.00</div></div>
<svg class="r" style="left:1872px;top:515px" width="5" height="15" viewBox="0 0 5 15"><ellipse cx="2.4" cy="2.5" rx="1.5" ry="1.15" fill="#000"/><ellipse cx="2.4" cy="7.4" rx="1.5" ry="1.15" fill="#000"/><ellipse cx="2.4" cy="12.3" rx="1.5" ry="1.15" fill="#000"/></svg>
<div class="r" style="left:238px;top:570px;width:1666px;height:1px;background:#d6d6d6"></div>
<div class="r" style="left:241px;top:539px;width:42px;height:31px;overflow:hidden"><div class="t" style="left:0.00px;top:9.66px;font-size:13.4px;color:#000;transform:scaleX(1.0170);-webkit-text-stroke:0.15px #000;">5310</div></div>
<div class="r" style="left:290.3px;top:539px;width:148.7px;height:31px;overflow:hidden"><div class="t" style="left:0.00px;top:9.66px;font-size:13.4px;color:#000;-webkit-text-stroke:0.15px #000;">11 Jul 2025</div></div>
<div class="r" style="left:446.3px;top:539px;width:147.7px;height:31px;overflow:hidden"><div class="t" style="left:0.00px;top:9.66px;font-size:13.4px;color:#000;transform:scaleX(1.0143);-webkit-text-stroke:0.15px #000;">Ryan / Patrick Test</div></div>
<div class="r" style="left:1068.3px;top:539px;width:148.70000000000005px;height:31px;overflow:hidden"><div class="t" style="left:0.00px;top:9.66px;font-size:13.4px;color:#000;transform:scaleX(1.0163);-webkit-text-stroke:0.15px #000;">0.00</div></div>
<div class="r" style="left:1224.3px;top:539px;width:147.70000000000005px;height:31px;overflow:hidden"><div class="t" style="left:0.00px;top:9.66px;font-size:13.4px;color:#000;transform:scaleX(1.0163);-webkit-text-stroke:0.15px #000;">0.00</div></div>
<div class="r" style="left:1379.3px;top:539px;width:148.70000000000005px;height:31px;overflow:hidden"><div class="t" style="left:0.00px;top:9.66px;font-size:13.4px;color:#000;transform:scaleX(1.0163);-webkit-text-stroke:0.15px #000;">0.00</div></div>
<div class="r" style="left:1535.3px;top:539px;width:147.70000000000005px;height:31px;overflow:hidden"><div class="t" style="left:0.00px;top:9.66px;font-size:13.4px;color:#000;transform:scaleX(1.0163);-webkit-text-stroke:0.15px #000;">0.00</div></div>
<div class="r" style="left:1690.3px;top:539px;width:148.70000000000005px;height:31px;overflow:hidden"><div class="t" style="left:0.00px;top:9.66px;font-size:13.4px;color:#000;transform:scaleX(1.0163);-webkit-text-stroke:0.15px #000;">0.00</div></div>
<svg class="r" style="left:1872px;top:547px" width="5" height="15" viewBox="0 0 5 15"><ellipse cx="2.4" cy="2.5" rx="1.5" ry="1.15" fill="#000"/><ellipse cx="2.4" cy="7.4" rx="1.5" ry="1.15" fill="#000"/><ellipse cx="2.4" cy="12.3" rx="1.5" ry="1.15" fill="#000"/></svg>
<div class="r" style="left:238px;top:602px;width:1666px;height:1px;background:#d6d6d6"></div>
<div class="r" style="left:241px;top:571px;width:42px;height:31px;overflow:hidden"><div class="t" style="left:0.00px;top:9.66px;font-size:13.4px;color:#000;transform:scaleX(1.0170);-webkit-text-stroke:0.15px #000;">5308</div></div>
<div class="r" style="left:290.3px;top:571px;width:148.7px;height:31px;overflow:hidden"><div class="t" style="left:0.00px;top:9.66px;font-size:13.4px;color:#000;-webkit-text-stroke:0.15px #000;">11 Jul 2025</div></div>
<div class="r" style="left:446.3px;top:571px;width:147.7px;height:31px;overflow:hidden"><div class="t" style="left:0.00px;top:9.66px;font-size:13.4px;color:#000;transform:scaleX(1.0398);-webkit-text-stroke:0.15px #000;">Wingate Group 120- 7/11</div></div>
<div class="r" style="left:601.3px;top:571px;width:148.70000000000005px;height:31px;overflow:hidden"><div class="t" style="left:0.00px;top:9.66px;font-size:13.4px;color:#000;transform:scaleX(1.0334);-webkit-text-stroke:0.15px #000;">Grant Wingate</div></div>
<div class="r" style="left:757.3px;top:571px;width:147.70000000000005px;height:31px;overflow:hidden"><div class="t" style="left:0.00px;top:9.66px;font-size:13.4px;color:#000;transform:scaleX(1.0273);-webkit-text-stroke:0.15px #000;">grant@clubcaddie.com</div></div>
<div class="r" style="left:1068.3px;top:571px;width:148.70000000000005px;height:31px;overflow:hidden"><div class="t" style="left:0.00px;top:9.66px;font-size:13.4px;color:#000;transform:scaleX(1.0159);-webkit-text-stroke:0.15px #000;">30,646.94</div></div>
<div class="r" style="left:1224.3px;top:571px;width:147.70000000000005px;height:31px;overflow:hidden"><div class="t" style="left:0.00px;top:9.66px;font-size:13.4px;color:#000;transform:scaleX(1.0159);-webkit-text-stroke:0.15px #000;">30,586.69</div></div>
<div class="r" style="left:1379.3px;top:571px;width:148.70000000000005px;height:31px;overflow:hidden"><div class="t" style="left:0.00px;top:9.66px;font-size:13.4px;color:#000;transform:scaleX(1.0159);-webkit-text-stroke:0.15px #000;">30,646.94</div></div>
<div class="r" style="left:1535.3px;top:571px;width:147.70000000000005px;height:31px;overflow:hidden"><div class="t" style="left:0.00px;top:9.66px;font-size:13.4px;color:#000;transform:scaleX(1.0175);-webkit-text-stroke:0.15px #000;">-60.25</div></div>
<div class="r" style="left:1690.3px;top:571px;width:148.70000000000005px;height:31px;overflow:hidden"><div class="t" style="left:0.00px;top:9.66px;font-size:13.4px;color:#000;transform:scaleX(1.0165);-webkit-text-stroke:0.15px #000;">60.25</div></div>
<svg class="r" style="left:1872px;top:579px" width="5" height="15" viewBox="0 0 5 15"><ellipse cx="2.4" cy="2.5" rx="1.5" ry="1.15" fill="#000"/><ellipse cx="2.4" cy="7.4" rx="1.5" ry="1.15" fill="#000"/><ellipse cx="2.4" cy="12.3" rx="1.5" ry="1.15" fill="#000"/></svg>
<div class="r" style="left:238px;top:634px;width:1666px;height:1px;background:#d6d6d6"></div>
<div class="r" style="left:241px;top:603px;width:42px;height:31px;overflow:hidden"><div class="t" style="left:0.00px;top:9.66px;font-size:13.4px;color:#000;transform:scaleX(1.0170);-webkit-text-stroke:0.15px #000;">5208</div></div>
<div class="r" style="left:290.3px;top:603px;width:148.7px;height:31px;overflow:hidden"><div class="t" style="left:0.00px;top:9.66px;font-size:13.4px;color:#000;transform:scaleX(0.9856);-webkit-text-stroke:0.15px #000;">03 Jun 2025</div></div>
<div class="r" style="left:446.3px;top:603px;width:147.7px;height:31px;overflow:hidden"><div class="t" style="left:0.00px;top:9.66px;font-size:13.4px;color:#000;transform:scaleX(1.1691);-webkit-text-stroke:0.15px #000;">tnf</div></div>
<div class="r" style="left:601.3px;top:603px;width:148.70000000000005px;height:31px;overflow:hidden"><div class="t" style="left:0.00px;top:9.66px;font-size:13.4px;color:#000;transform:scaleX(1.0333);-webkit-text-stroke:0.15px #000;">Mike McCarraher</div></div>
<div class="r" style="left:757.3px;top:603px;width:147.70000000000005px;height:31px;overflow:hidden"><div class="t" style="left:0.00px;top:9.66px;font-size:13.4px;color:#000;transform:scaleX(1.0248);-webkit-text-stroke:0.15px #000;">mike@clubcaddie.com</div></div>
<div class="r" style="left:912.3px;top:603px;width:148.70000000000005px;height:31px;overflow:hidden"><div class="t" style="left:0.00px;top:9.66px;font-size:13.4px;color:#000;transform:scaleX(1.0449);-webkit-text-stroke:0.15px #000;">1112223332</div></div>
<div class="r" style="left:1068.3px;top:603px;width:148.70000000000005px;height:31px;overflow:hidden"><div class="t" style="left:0.00px;top:9.66px;font-size:13.4px;color:#000;transform:scaleX(1.0159);-webkit-text-stroke:0.15px #000;">12,599.49</div></div>
<div class="r" style="left:1224.3px;top:603px;width:147.70000000000005px;height:31px;overflow:hidden"><div class="t" style="left:0.00px;top:9.66px;font-size:13.4px;color:#000;transform:scaleX(1.0159);-webkit-text-stroke:0.15px #000;">12,561.50</div></div>
<div class="r" style="left:1379.3px;top:603px;width:148.70000000000005px;height:31px;overflow:hidden"><div class="t" style="left:0.00px;top:9.66px;font-size:13.4px;color:#000;transform:scaleX(1.0159);-webkit-text-stroke:0.15px #000;">12,599.49</div></div>
<div class="r" style="left:1535.3px;top:603px;width:147.70000000000005px;height:31px;overflow:hidden"><div class="t" style="left:0.00px;top:9.66px;font-size:13.4px;color:#000;transform:scaleX(1.0175);-webkit-text-stroke:0.15px #000;">-37.99</div></div>
<div class="r" style="left:1690.3px;top:603px;width:148.70000000000005px;height:31px;overflow:hidden"><div class="t" style="left:0.00px;top:9.66px;font-size:13.4px;color:#000;transform:scaleX(1.0165);-webkit-text-stroke:0.15px #000;">37.99</div></div>
<svg class="r" style="left:1872px;top:611px" width="5" height="15" viewBox="0 0 5 15"><ellipse cx="2.4" cy="2.5" rx="1.5" ry="1.15" fill="#000"/><ellipse cx="2.4" cy="7.4" rx="1.5" ry="1.15" fill="#000"/><ellipse cx="2.4" cy="12.3" rx="1.5" ry="1.15" fill="#000"/></svg>
<div class="r" style="left:238px;top:666px;width:1666px;height:1px;background:#d6d6d6"></div>
<div class="r" style="left:241px;top:635px;width:42px;height:31px;overflow:hidden"><div class="t" style="left:0.00px;top:9.66px;font-size:13.4px;color:#000;transform:scaleX(1.0170);-webkit-text-stroke:0.15px #000;">5267</div></div>
<div class="r" style="left:290.3px;top:635px;width:148.7px;height:31px;overflow:hidden"><div class="t" style="left:0.00px;top:9.66px;font-size:13.4px;color:#000;transform:scaleX(1.0190);-webkit-text-stroke:0.15px #000;">30 May 2025</div></div>
<div class="r" style="left:446.3px;top:635px;width:147.7px;height:31px;overflow:hidden"><div class="t" style="left:0.00px;top:9.66px;font-size:13.4px;color:#000;transform:scaleX(1.0558);-webkit-text-stroke:0.15px #000;">2 Day Member/Member</div></div>
<div class="r" style="left:1068.3px;top:635px;width:148.70000000000005px;height:31px;overflow:hidden"><div class="t" style="left:0.00px;top:9.66px;font-size:13.4px;color:#000;transform:scaleX(1.0166);-webkit-text-stroke:0.15px #000;">795.00</div></div>
<div class="r" style="left:1224.3px;top:635px;width:147.70000000000005px;height:31px;overflow:hidden"><div class="t" style="left:0.00px;top:9.66px;font-size:13.4px;color:#000;transform:scaleX(1.0166);-webkit-text-stroke:0.15px #000;">800.00</div></div>
<div class="r" style="left:1379.3px;top:635px;width:148.70000000000005px;height:31px;overflow:hidden"><div class="t" style="left:0.00px;top:9.66px;font-size:13.4px;color:#000;transform:scaleX(1.0163);-webkit-text-stroke:0.15px #000;">0.00</div></div>
<div class="r" style="left:1535.3px;top:635px;width:147.70000000000005px;height:31px;overflow:hidden"><div class="t" style="left:0.00px;top:9.66px;font-size:13.4px;color:#000;transform:scaleX(1.0166);-webkit-text-stroke:0.15px #000;">800.00</div></div>
<div class="r" style="left:1690.3px;top:635px;width:148.70000000000005px;height:31px;overflow:hidden"><div class="t" style="left:0.00px;top:9.66px;font-size:13.4px;color:#000;transform:scaleX(1.0176);-webkit-text-stroke:0.15px #000;">-5.00</div></div>
<svg class="r" style="left:1872px;top:643px" width="5" height="15" viewBox="0 0 5 15"><ellipse cx="2.4" cy="2.5" rx="1.5" ry="1.15" fill="#000"/><ellipse cx="2.4" cy="7.4" rx="1.5" ry="1.15" fill="#000"/><ellipse cx="2.4" cy="12.3" rx="1.5" ry="1.15" fill="#000"/></svg>
<div class="r" style="left:238px;top:698px;width:1666px;height:1px;background:#d6d6d6"></div>
<div class="r" style="left:241px;top:667px;width:42px;height:31px;overflow:hidden"><div class="t" style="left:0.00px;top:9.66px;font-size:13.4px;color:#000;transform:scaleX(1.0170);-webkit-text-stroke:0.15px #000;">5258</div></div>
<div class="r" style="left:290.3px;top:667px;width:148.7px;height:31px;overflow:hidden"><div class="t" style="left:0.00px;top:9.66px;font-size:13.4px;color:#000;transform:scaleX(1.0233);-webkit-text-stroke:0.15px #000;">29 Apr 2025</div></div>
<div class="r" style="left:446.3px;top:667px;width:147.7px;height:31px;overflow:hidden"><div class="t" style="left:0.00px;top:9.66px;font-size:13.4px;color:#000;transform:scaleX(0.9867);-webkit-text-stroke:0.15px #000;">$0 Check in Event</div></div>
<div class="r" style="left:601.3px;top:667px;width:148.70000000000005px;height:31px;overflow:hidden"><div class="t" style="left:0.00px;top:9.66px;font-size:13.4px;color:#000;-webkit-text-stroke:0.15px #000;">Adam Bailey</div></div>
<div class="r" style="left:757.3px;top:667px;width:147.70000000000005px;height:31px;overflow:hidden"><div class="t" style="left:0.00px;top:9.66px;font-size:13.4px;color:#000;transform:scaleX(1.0208);-webkit-text-stroke:0.15px #000;">adam.bailey@clubcaddie.com</div></div>
<div class="r" style="left:912.3px;top:667px;width:148.70000000000005px;height:31px;overflow:hidden"><div class="t" style="left:0.00px;top:9.66px;font-size:13.4px;color:#000;transform:scaleX(1.0170);-webkit-text-stroke:0.15px #000;">3135555555</div></div>
<div class="r" style="left:1068.3px;top:667px;width:148.70000000000005px;height:31px;overflow:hidden"><div class="t" style="left:0.00px;top:9.66px;font-size:13.4px;color:#000;transform:scaleX(1.0163);-webkit-text-stroke:0.15px #000;">0.00</div></div>
<div class="r" style="left:1224.3px;top:667px;width:147.70000000000005px;height:31px;overflow:hidden"><div class="t" style="left:0.00px;top:9.66px;font-size:13.4px;color:#000;transform:scaleX(1.0166);-webkit-text-stroke:0.15px #000;">100.00</div></div>
<div class="r" style="left:1379.3px;top:667px;width:148.70000000000005px;height:31px;overflow:hidden"><div class="t" style="left:0.00px;top:9.66px;font-size:13.4px;color:#000;transform:scaleX(1.0163);-webkit-text-stroke:0.15px #000;">0.00</div></div>
<div class="r" style="left:1535.3px;top:667px;width:147.70000000000005px;height:31px;overflow:hidden"><div class="t" style="left:0.00px;top:9.66px;font-size:13.4px;color:#000;transform:scaleX(1.0166);-webkit-text-stroke:0.15px #000;">100.00</div></div>
<div class="r" style="left:1690.3px;top:667px;width:148.70000000000005px;height:31px;overflow:hidden"><div class="t" style="left:0.00px;top:9.66px;font-size:13.4px;color:#000;transform:scaleX(1.0174);-webkit-text-stroke:0.15px #000;">-100.00</div></div>
<svg class="r" style="left:1872px;top:675px" width="5" height="15" viewBox="0 0 5 15"><ellipse cx="2.4" cy="2.5" rx="1.5" ry="1.15" fill="#000"/><ellipse cx="2.4" cy="7.4" rx="1.5" ry="1.15" fill="#000"/><ellipse cx="2.4" cy="12.3" rx="1.5" ry="1.15" fill="#000"/></svg>
<div class="r" style="left:238px;top:730px;width:1666px;height:1px;background:#d6d6d6"></div>
<div class="r" style="left:241px;top:699px;width:42px;height:31px;overflow:hidden"><div class="t" style="left:0.00px;top:9.66px;font-size:13.4px;color:#000;transform:scaleX(1.0170);-webkit-text-stroke:0.15px #000;">5223</div></div>
<div class="r" style="left:290.3px;top:699px;width:148.7px;height:31px;overflow:hidden"><div class="t" style="left:0.00px;top:9.66px;font-size:13.4px;color:#000;transform:scaleX(0.9886);-webkit-text-stroke:0.15px #000;">22 Feb 2025</div></div>
<div class="r" style="left:446.3px;top:699px;width:147.7px;height:31px;overflow:hidden"><div class="t" style="left:0.00px;top:9.66px;font-size:13.4px;color:#000;transform:scaleX(1.0105);-webkit-text-stroke:0.15px #000;">Stu Test</div></div>
<div class="r" style="left:601.3px;top:699px;width:148.70000000000005px;height:31px;overflow:hidden"><div class="t" style="left:0.00px;top:9.66px;font-size:13.4px;color:#000;transform:scaleX(1.0372);-webkit-text-stroke:0.15px #000;">Stuart Proctor</div></div>
<div class="r" style="left:757.3px;top:699px;width:147.70000000000005px;height:31px;overflow:hidden"><div class="t" style="left:0.00px;top:9.66px;font-size:13.4px;color:#000;transform:scaleX(1.0499);-webkit-text-stroke:0.15px #000;">proctor.stu@gmail.com</div></div>
<div class="r" style="left:912.3px;top:699px;width:148.70000000000005px;height:31px;overflow:hidden"><div class="t" style="left:0.00px;top:9.66px;font-size:13.4px;color:#000;transform:scaleX(1.0170);-webkit-text-stroke:0.15px #000;">4078371329</div></div>
<div class="r" style="left:1068.3px;top:699px;width:148.70000000000005px;height:31px;overflow:hidden"><div class="t" style="left:0.00px;top:9.66px;font-size:13.4px;color:#000;transform:scaleX(1.0159);-webkit-text-stroke:0.15px #000;">14,290.00</div></div>
<div class="r" style="left:1224.3px;top:699px;width:147.70000000000005px;height:31px;overflow:hidden"><div class="t" style="left:0.00px;top:9.66px;font-size:13.4px;color:#000;transform:scaleX(1.0163);-webkit-text-stroke:0.15px #000;">0.00</div></div>
<div class="r" style="left:1379.3px;top:699px;width:148.70000000000005px;height:31px;overflow:hidden"><div class="t" style="left:0.00px;top:9.66px;font-size:13.4px;color:#000;transform:scaleX(1.0163);-webkit-text-stroke:0.15px #000;">0.00</div></div>
<div class="r" style="left:1535.3px;top:699px;width:147.70000000000005px;height:31px;overflow:hidden"><div class="t" style="left:0.00px;top:9.66px;font-size:13.4px;color:#000;transform:scaleX(1.0163);-webkit-text-stroke:0.15px #000;">0.00</div></div>
<div class="r" style="left:1690.3px;top:699px;width:148.70000000000005px;height:31px;overflow:hidden"><div class="t" style="left:0.00px;top:9.66px;font-size:13.4px;color:#000;transform:scaleX(1.0159);-webkit-text-stroke:0.15px #000;">14,290.00</div></div>
<svg class="r" style="left:1872px;top:707px" width="5" height="15" viewBox="0 0 5 15"><ellipse cx="2.4" cy="2.5" rx="1.5" ry="1.15" fill="#000"/><ellipse cx="2.4" cy="7.4" rx="1.5" ry="1.15" fill="#000"/><ellipse cx="2.4" cy="12.3" rx="1.5" ry="1.15" fill="#000"/></svg>
<div class="r" style="left:238px;top:762px;width:1666px;height:1px;background:#d6d6d6"></div>
<div class="r" style="left:241px;top:731px;width:42px;height:31px;overflow:hidden"><div class="t" style="left:0.00px;top:9.66px;font-size:13.4px;color:#000;transform:scaleX(1.0170);-webkit-text-stroke:0.15px #000;">5207</div></div>
<div class="r" style="left:290.3px;top:731px;width:148.7px;height:31px;overflow:hidden"><div class="t" style="left:0.00px;top:9.66px;font-size:13.4px;color:#000;transform:scaleX(0.9762);-webkit-text-stroke:0.15px #000;">15 Jan 2025</div></div>
<div class="r" style="left:446.3px;top:731px;width:147.7px;height:31px;overflow:hidden"><div class="t" style="left:0.00px;top:9.66px;font-size:13.4px;color:#000;transform:scaleX(1.0415);-webkit-text-stroke:0.15px #000;">1/15 Golf Outing</div></div>
<div class="r" style="left:1068.3px;top:731px;width:148.70000000000005px;height:31px;overflow:hidden"><div class="t" style="left:0.00px;top:9.66px;font-size:13.4px;color:#000;transform:scaleX(1.0166);-webkit-text-stroke:0.15px #000;">171.94</div></div>
<div class="r" style="left:1224.3px;top:731px;width:147.70000000000005px;height:31px;overflow:hidden"><div class="t" style="left:0.00px;top:9.66px;font-size:13.4px;color:#000;transform:scaleX(1.0166);-webkit-text-stroke:0.15px #000;">171.94</div></div>
<div class="r" style="left:1379.3px;top:731px;width:148.70000000000005px;height:31px;overflow:hidden"><div class="t" style="left:0.00px;top:9.66px;font-size:13.4px;color:#000;transform:scaleX(1.0166);-webkit-text-stroke:0.15px #000;">171.94</div></div>
<div class="r" style="left:1535.3px;top:731px;width:147.70000000000005px;height:31px;overflow:hidden"><div class="t" style="left:0.00px;top:9.66px;font-size:13.4px;color:#000;transform:scaleX(1.0163);-webkit-text-stroke:0.15px #000;">0.00</div></div>
<div class="r" style="left:1690.3px;top:731px;width:148.70000000000005px;height:31px;overflow:hidden"><div class="t" style="left:0.00px;top:9.66px;font-size:13.4px;color:#000;transform:scaleX(1.0163);-webkit-text-stroke:0.15px #000;">0.00</div></div>
<svg class="r" style="left:1872px;top:739px" width="5" height="15" viewBox="0 0 5 15"><ellipse cx="2.4" cy="2.5" rx="1.5" ry="1.15" fill="#000"/><ellipse cx="2.4" cy="7.4" rx="1.5" ry="1.15" fill="#000"/><ellipse cx="2.4" cy="12.3" rx="1.5" ry="1.15" fill="#000"/></svg>
<div class="r" style="left:238px;top:794px;width:1666px;height:1px;background:#d6d6d6"></div>
<div class="r" style="left:241px;top:763px;width:42px;height:31px;overflow:hidden"><div class="t" style="left:0.00px;top:9.66px;font-size:13.4px;color:#000;transform:scaleX(1.0170);-webkit-text-stroke:0.15px #000;">5205</div></div>
<div class="r" style="left:290.3px;top:763px;width:148.7px;height:31px;overflow:hidden"><div class="t" style="left:0.00px;top:9.66px;font-size:13.4px;color:#000;transform:scaleX(0.9762);-webkit-text-stroke:0.15px #000;">10 Jan 2025</div></div>
<div class="r" style="left:446.3px;top:763px;width:147.7px;height:31px;overflow:hidden"><div class="t" style="left:0.00px;top:9.66px;font-size:13.4px;color:#000;transform:scaleX(1.0305);-webkit-text-stroke:0.15px #000;">January Tournament</div></div>
<div class="r" style="left:1068.3px;top:763px;width:148.70000000000005px;height:31px;overflow:hidden"><div class="t" style="left:0.00px;top:9.66px;font-size:13.4px;color:#000;transform:scaleX(1.0166);-webkit-text-stroke:0.15px #000;">301.00</div></div>
<div class="r" style="left:1224.3px;top:763px;width:147.70000000000005px;height:31px;overflow:hidden"><div class="t" style="left:0.00px;top:9.66px;font-size:13.4px;color:#000;transform:scaleX(1.0166);-webkit-text-stroke:0.15px #000;">301.00</div></div>
<div class="r" style="left:1379.3px;top:763px;width:148.70000000000005px;height:31px;overflow:hidden"><div class="t" style="left:0.00px;top:9.66px;font-size:13.4px;color:#000;transform:scaleX(1.0166);-webkit-text-stroke:0.15px #000;">301.00</div></div>
<div class="r" style="left:1535.3px;top:763px;width:147.70000000000005px;height:31px;overflow:hidden"><div class="t" style="left:0.00px;top:9.66px;font-size:13.4px;color:#000;transform:scaleX(1.0163);-webkit-text-stroke:0.15px #000;">0.00</div></div>
<div class="r" style="left:1690.3px;top:763px;width:148.70000000000005px;height:31px;overflow:hidden"><div class="t" style="left:0.00px;top:9.66px;font-size:13.4px;color:#000;transform:scaleX(1.0163);-webkit-text-stroke:0.15px #000;">0.00</div></div>
<svg class="r" style="left:1872px;top:771px" width="5" height="15" viewBox="0 0 5 15"><ellipse cx="2.4" cy="2.5" rx="1.5" ry="1.15" fill="#000"/><ellipse cx="2.4" cy="7.4" rx="1.5" ry="1.15" fill="#000"/><ellipse cx="2.4" cy="12.3" rx="1.5" ry="1.15" fill="#000"/></svg>
<div class="r" style="left:238px;top:826px;width:1666px;height:1px;background:#d6d6d6"></div>
<div class="r" style="left:241px;top:795px;width:42px;height:31px;overflow:hidden"><div class="t" style="left:0.00px;top:9.66px;font-size:13.4px;color:#000;transform:scaleX(1.0170);-webkit-text-stroke:0.15px #000;">5143</div></div>
<div class="r" style="left:290.3px;top:795px;width:148.7px;height:31px;overflow:hidden"><div class="t" style="left:0.00px;top:9.66px;font-size:13.4px;color:#000;-webkit-text-stroke:0.15px #000;">11 Dec 2024</div></div>
<div class="r" style="left:446.3px;top:795px;width:147.7px;height:31px;overflow:hidden"><div class="t" style="left:0.00px;top:9.66px;font-size:13.4px;color:#000;-webkit-text-stroke:0.15px #000;">Club Caddie Golf Outing</div></div>
<div class="r" style="left:601.3px;top:795px;width:148.70000000000005px;height:31px;overflow:hidden"><div class="t" style="left:0.00px;top:9.66px;font-size:13.4px;color:#000;-webkit-text-stroke:0.15px #000;">Adam Bailey</div></div>
<div class="r" style="left:757.3px;top:795px;width:147.70000000000005px;height:31px;overflow:hidden"><div class="t" style="left:0.00px;top:9.66px;font-size:13.4px;color:#000;transform:scaleX(1.0208);-webkit-text-stroke:0.15px #000;">adam.bailey@clubcaddie.com</div></div>
<div class="r" style="left:912.3px;top:795px;width:148.70000000000005px;height:31px;overflow:hidden"><div class="t" style="left:0.00px;top:9.66px;font-size:13.4px;color:#000;transform:scaleX(1.0170);-webkit-text-stroke:0.15px #000;">3135555555</div></div>
<div class="r" style="left:1068.3px;top:795px;width:148.70000000000005px;height:31px;overflow:hidden"><div class="t" style="left:0.00px;top:9.66px;font-size:13.4px;color:#000;transform:scaleX(1.0157);-webkit-text-stroke:0.15px #000;">6,362.80</div></div>
<div class="r" style="left:1224.3px;top:795px;width:147.70000000000005px;height:31px;overflow:hidden"><div class="t" style="left:0.00px;top:9.66px;font-size:13.4px;color:#000;transform:scaleX(1.0157);-webkit-text-stroke:0.15px #000;">6,526.00</div></div>
<div class="r" style="left:1379.3px;top:795px;width:148.70000000000005px;height:31px;overflow:hidden"><div class="t" style="left:0.00px;top:9.66px;font-size:13.4px;color:#000;transform:scaleX(1.0163);-webkit-text-stroke:0.15px #000;">0.00</div></div>
<div class="r" style="left:1535.3px;top:795px;width:147.70000000000005px;height:31px;overflow:hidden"><div class="t" style="left:0.00px;top:9.66px;font-size:13.4px;color:#000;transform:scaleX(1.0157);-webkit-text-stroke:0.15px #000;">6,526.00</div></div>
<div class="r" style="left:1690.3px;top:795px;width:148.70000000000005px;height:31px;overflow:hidden"><div class="t" style="left:0.00px;top:9.66px;font-size:13.4px;color:#000;transform:scaleX(1.0174);-webkit-text-stroke:0.15px #000;">-163.20</div></div>
<svg class="r" style="left:1872px;top:803px" width="5" height="15" viewBox="0 0 5 15"><ellipse cx="2.4" cy="2.5" rx="1.5" ry="1.15" fill="#000"/><ellipse cx="2.4" cy="7.4" rx="1.5" ry="1.15" fill="#000"/><ellipse cx="2.4" cy="12.3" rx="1.5" ry="1.15" fill="#000"/></svg>
<div class="r" style="left:238px;top:858px;width:1666px;height:1px;background:#d6d6d6"></div>
<div class="r" style="left:241px;top:827px;width:42px;height:31px;overflow:hidden"><div class="t" style="left:0.00px;top:9.66px;font-size:13.4px;color:#000;transform:scaleX(1.0170);-webkit-text-stroke:0.15px #000;">5193</div></div>
<div class="r" style="left:290.3px;top:827px;width:148.7px;height:31px;overflow:hidden"><div class="t" style="left:0.00px;top:9.66px;font-size:13.4px;color:#000;transform:scaleX(0.9896);-webkit-text-stroke:0.15px #000;">09 Dec 2024</div></div>
<div class="r" style="left:446.3px;top:827px;width:147.7px;height:31px;overflow:hidden"><div class="t" style="left:0.00px;top:9.66px;font-size:13.4px;color:#000;transform:scaleX(1.0191);-webkit-text-stroke:0.15px #000;">Event Reporting Test</div></div>
<div class="r" style="left:601.3px;top:827px;width:148.70000000000005px;height:31px;overflow:hidden"><div class="t" style="left:0.00px;top:9.66px;font-size:13.4px;color:#000;transform:scaleX(1.0153);-webkit-text-stroke:0.15px #000;">Michael Rawlins</div></div>
<div class="r" style="left:757.3px;top:827px;width:147.70000000000005px;height:31px;overflow:hidden"><div class="t" style="left:0.00px;top:9.66px;font-size:13.4px;color:#000;transform:scaleX(1.0223);-webkit-text-stroke:0.15px #000;">michael@clubcaddie.com</div></div>
<div class="r" style="left:912.3px;top:827px;width:148.70000000000005px;height:31px;overflow:hidden"><div class="t" style="left:0.00px;top:9.66px;font-size:13.4px;color:#000;transform:scaleX(1.0170);-webkit-text-stroke:0.15px #000;">2622064015</div></div>
<div class="r" style="left:1068.3px;top:827px;width:148.70000000000005px;height:31px;overflow:hidden"><div class="t" style="left:0.00px;top:9.66px;font-size:13.4px;color:#000;transform:scaleX(1.0159);-webkit-text-stroke:0.15px #000;">10,015.40</div></div>
<div class="r" style="left:1224.3px;top:827px;width:147.70000000000005px;height:31px;overflow:hidden"><div class="t" style="left:0.00px;top:9.66px;font-size:13.4px;color:#000;transform:scaleX(1.0159);-webkit-text-stroke:0.15px #000;">10,000.40</div></div>
<div class="r" style="left:1379.3px;top:827px;width:148.70000000000005px;height:31px;overflow:hidden"><div class="t" style="left:0.00px;top:9.66px;font-size:13.4px;color:#000;transform:scaleX(1.0159);-webkit-text-stroke:0.15px #000;">10,015.40</div></div>
<div class="r" style="left:1535.3px;top:827px;width:147.70000000000005px;height:31px;overflow:hidden"><div class="t" style="left:0.00px;top:9.66px;font-size:13.4px;color:#000;transform:scaleX(1.0175);-webkit-text-stroke:0.15px #000;">-15.00</div></div>
<div class="r" style="left:1690.3px;top:827px;width:148.70000000000005px;height:31px;overflow:hidden"><div class="t" style="left:0.00px;top:9.66px;font-size:13.4px;color:#000;transform:scaleX(1.0165);-webkit-text-stroke:0.15px #000;">15.00</div></div>
<svg class="r" style="left:1872px;top:835px" width="5" height="15" viewBox="0 0 5 15"><ellipse cx="2.4" cy="2.5" rx="1.5" ry="1.15" fill="#000"/><ellipse cx="2.4" cy="7.4" rx="1.5" ry="1.15" fill="#000"/><ellipse cx="2.4" cy="12.3" rx="1.5" ry="1.15" fill="#000"/></svg>
<div class="r" style="left:238px;top:890px;width:1666px;height:1px;background:#d6d6d6"></div>
<div class="r" style="left:241px;top:859px;width:42px;height:31px;overflow:hidden"><div class="t" style="left:0.00px;top:9.66px;font-size:13.4px;color:#000;transform:scaleX(1.0170);-webkit-text-stroke:0.15px #000;">5182</div></div>
<div class="r" style="left:290.3px;top:859px;width:148.7px;height:31px;overflow:hidden"><div class="t" style="left:0.00px;top:9.66px;font-size:13.4px;color:#000;transform:scaleX(1.0071);-webkit-text-stroke:0.15px #000;">20 Nov 2024</div></div>
<div class="r" style="left:446.3px;top:859px;width:147.7px;height:31px;overflow:hidden"><div class="t" style="left:0.00px;top:9.66px;font-size:13.4px;color:#000;transform:scaleX(0.9919);-webkit-text-stroke:0.15px #000;">Ryan Test</div></div>
<div class="r" style="left:1068.3px;top:859px;width:148.70000000000005px;height:31px;overflow:hidden"><div class="t" style="left:0.00px;top:9.66px;font-size:13.4px;color:#000;transform:scaleX(1.0157);-webkit-text-stroke:0.15px #000;">1,700.00</div></div>
<div class="r" style="left:1224.3px;top:859px;width:147.70000000000005px;height:31px;overflow:hidden"><div class="t" style="left:0.00px;top:9.66px;font-size:13.4px;color:#000;transform:scaleX(1.0157);-webkit-text-stroke:0.15px #000;">1,700.00</div></div>
<div class="r" style="left:1379.3px;top:859px;width:148.70000000000005px;height:31px;overflow:hidden"><div class="t" style="left:0.00px;top:9.66px;font-size:13.4px;color:#000;transform:scaleX(1.0157);-webkit-text-stroke:0.15px #000;">1,700.00</div></div>
<div class="r" style="left:1535.3px;top:859px;width:147.70000000000005px;height:31px;overflow:hidden"><div class="t" style="left:0.00px;top:9.66px;font-size:13.4px;color:#000;transform:scaleX(1.0163);-webkit-text-stroke:0.15px #000;">0.00</div></div>
<div class="r" style="left:1690.3px;top:859px;width:148.70000000000005px;height:31px;overflow:hidden"><div class="t" style="left:0.00px;top:9.66px;font-size:13.4px;color:#000;transform:scaleX(1.0163);-webkit-text-stroke:0.15px #000;">0.00</div></div>
<svg class="r" style="left:1872px;top:867px" width="5" height="15" viewBox="0 0 5 15"><ellipse cx="2.4" cy="2.5" rx="1.5" ry="1.15" fill="#000"/><ellipse cx="2.4" cy="7.4" rx="1.5" ry="1.15" fill="#000"/><ellipse cx="2.4" cy="12.3" rx="1.5" ry="1.15" fill="#000"/></svg>
<div class="r" style="left:235px;top:899px;width:1684px;height:1px;background:#a8a8a8"></div>
<div class="r" style="left:235px;top:900px;width:1684px;height:38px;background:#fff"></div>
<div class="r" style="left:234px;top:899px;width:1px;height:39px;background:#a8a8a8"></div>
<svg class="r" style="left:245px;top:914px" width="20" height="12" viewBox="0 0 20 12"><path d="M1 11 L10 1.5 L19 11 Z" fill="#000"/></svg>
<svg class="r" style="left:420px;top:914px" width="20" height="12" viewBox="0 0 20 12"><path d="M1 1 L10 10.5 L19 1 Z" fill="#000"/></svg>
<div class="t" style="left:275.40px;top:914.32px;font-size:12.5px;color:#111;font-weight:bold;transform:scaleX(0.9171);">Total Pages : 6 | Page : 1</div>
<div class="r" style="left:1905px;top:220px;width:20px;height:284px;background:#a9a8a9;border-radius:6px"></div>
<svg class="r" style="left:1880px;top:906px" width="28" height="26" viewBox="1880 906 28 26">
<rect x="1893" y="912" width="11.2" height="15.2" fill="#fff" stroke="#1d7446" stroke-width="1"/>
<path d="M1896.5 912 V927 M1900.3 912 V927 M1893 915.8 H1904 M1893 919.6 H1904 M1893 923.4 H1904" stroke="#1d7446" stroke-width="0.9"/>
<path d="M1883 912 L1896.5 909.6 V929.8 L1883 927.4 Z" fill="#1d7446"/>
<path d="M1886.6 915.5 L1891.8 924.2 M1891.8 915.5 L1886.6 924.2" stroke="#fff" stroke-width="1.6"/>
</svg>
<svg class="r" style="left:0;top:0" width="1919" height="140" viewBox="0 0 1919 140">
<g fill="none" stroke="#fff" stroke-linecap="round" stroke-linejoin="round">
<!-- register -->
<rect x="457.9" y="52.2" width="1.2" height="14.8" fill="#f0f0f0" stroke="none"/><rect x="460.0" y="52.2" width="0.9" height="14.8" fill="#d8d8d8" stroke="none"/><rect x="462.0" y="52.2" width="1.8" height="14.8" fill="#eaeaea" stroke="none"/><rect x="465.2" y="52.2" width="2.4" height="14.8" fill="#a8a8a8" stroke="none"/><rect x="468.8" y="52.2" width="2.3" height="14.8" fill="#b8b8b8" stroke="none"/><rect x="472.0" y="52.2" width="0.9" height="14.8" fill="#c8c8c8" stroke="none"/><rect x="474.0" y="52.2" width="1.8" height="14.8" fill="#d0d0d0" stroke="none"/>
<path stroke-width="1.3" d="M474.4 38.4 Q475.5 33.6 481.7 33.3 Q487 33.3 491 35.6 Q496 38.6 497.8 42.4 Q497.5 44.8 495.2 46.8 L494.6 48.8 L494.9 63.2 Q494.8 70 493.4 73.7 Q491 78 486.4 77.9 Q482.6 77.6 482.8 74.3 Q483.2 70.5 485.2 66.7 L484.1 55.8 L482.6 55 L484.3 53.8 L483.7 47.4 Q482.8 45.6 481.1 45 Q477.8 43.8 475.8 42.7 Q474.2 41 474.4 38.4 Z"/>
<path stroke-width="1.1" d="M494.4 57.6 Q488 61.5 485.2 66.7"/>
<!-- tee sheet -->
<path stroke-width="1.4" d="M592.8 47 V43.6 H623.8 V77.6 H596 M592.8 50.5 V77.6 H594.5"/>
<line x1="596.3" y1="49.30" x2="599.7" y2="49.30" stroke-width="1.1"/><line x1="616.3" y1="49.30" x2="619.7" y2="49.30" stroke-width="1.1"/><line x1="596.3" y1="52.47" x2="599.7" y2="52.47" stroke-width="1.1"/><line x1="616.3" y1="52.47" x2="619.7" y2="52.47" stroke-width="1.1"/><line x1="596.3" y1="55.64" x2="599.7" y2="55.64" stroke-width="1.1"/><line x1="616.3" y1="55.64" x2="619.7" y2="55.64" stroke-width="1.1"/><line x1="596.3" y1="58.81" x2="599.7" y2="58.81" stroke-width="1.1"/><line x1="616.3" y1="58.81" x2="619.7" y2="58.81" stroke-width="1.1"/><line x1="596.3" y1="61.98" x2="599.7" y2="61.98" stroke-width="1.1"/><line x1="616.3" y1="61.98" x2="619.7" y2="61.98" stroke-width="1.1"/><line x1="596.3" y1="65.15" x2="599.7" y2="65.15" stroke-width="1.1"/><line x1="616.3" y1="65.15" x2="619.7" y2="65.15" stroke-width="1.1"/><line x1="596.3" y1="68.32" x2="599.7" y2="68.32" stroke-width="1.1"/><line x1="616.3" y1="68.32" x2="619.7" y2="68.32" stroke-width="1.1"/><line x1="596.3" y1="71.49" x2="599.7" y2="71.49" stroke-width="1.1"/><line x1="616.3" y1="71.49" x2="619.7" y2="71.49" stroke-width="1.1"/>
<path stroke-width="1.3" d="M604.6 50.6 V70.3 M602.4 70.6 H606.6 M605 50.6 L613.8 54.6 L605 58.2"/>
<!-- activities -->
<rect x="851.3" y="46.8" width="33.5" height="30.2" rx="2.6" stroke-width="2.3"/>
<line x1="851.3" y1="56" x2="884.8" y2="56" stroke-width="2.1"/>
<line x1="861.8" y1="43.5" x2="861.8" y2="49" stroke-width="2"/><line x1="874" y1="43.5" x2="874" y2="49" stroke-width="2"/>
<line x1="863" y1="63.4" x2="878" y2="63.4" stroke-width="2.4"/><line x1="863" y1="69.4" x2="878" y2="69.4" stroke-width="2.4"/>
<!-- venue -->
<g stroke-width="1.3">
<circle cx="998" cy="47.4" r="3.8"/><circle cx="985.6" cy="52.6" r="4.2"/><circle cx="1010.3" cy="52.6" r="4.2"/>
<path d="M993.2 60.5 V56.5 Q993.2 52.7 998 52.7 Q1002.8 52.7 1002.8 56.5 V60.5 M995.8 55.8 V60.5 M1000.2 55.8 V60.5"/>
<path d="M990.5 60.8 H1005.5 Q1007 61.5 1006.5 62.5 M990.5 60.8 Q989 61.5 989.5 62.5"/>
<path d="M982.3 70 V61 Q982.3 57.3 986 57.3 Q988.5 57.5 989.5 60.5 L992 64.5 H994 Q995 66.5 993.5 67 H987.5 L985 61.5"/>
<path d="M1013.7 70 V61 Q1013.7 57.3 1010 57.3 Q1007.5 57.5 1006.5 60.5 L1004 64.5 H1002 Q1001 66.5 1002.5 67 H1008.5 L1011 61.5"/>
<path d="M987 67 L981.8 75.8 H1014.2 L1009 67"/>
<path d="M981.5 78.2 H1014.5" stroke-width="1.1"/>
</g>
<!-- on demand -->
<rect x="1244.9" y="40.4" width="19.7" height="36.6" rx="3" stroke-width="1.9"/>
<line x1="1245" y1="70.8" x2="1264.5" y2="70.8" stroke-width="1.6"/>
<circle cx="1255.1" cy="50.9" r="2.9" stroke-width="1.6"/>
<path d="M1248.8 62.8 Q1248.8 56.3 1255.2 56.3 Q1261.6 56.3 1261.6 62.8 Z" stroke-width="1.7"/>
<path d="M1262.2 37.5 Q1266.5 38.5 1267.5 43" stroke-width="1.5"/>
<path d="M1262.5 33.8 Q1270.5 35 1271.5 42.8" stroke-width="1.5"/>
<!-- customers -->
<g stroke-width="2.1">
<circle cx="1379.4" cy="53.3" r="6.4"/><circle cx="1396.6" cy="53.3" r="6.4"/>
<path d="M1376 73.6 H1369.3 V69 Q1369.3 62 1375 59.3"/><path d="M1400 73.6 H1406.7 V69 Q1406.7 62 1401 59.3"/>
<circle cx="1388" cy="57.2" r="6.3" fill="#2d2926"/>
<path d="M1377.5 76.5 V71.5 Q1377.5 64.5 1382.5 63.5 Q1388 65.5 1393.5 63.5 Q1398.5 64.5 1398.5 71.5 V76.5 Z" fill="#2d2926"/>
</g>
<!-- vouchers -->
<path stroke-width="2" d="M1508.5 76.8 V48.2 Q1508.5 45.8 1510.8 45.8 H1533.4 Q1535.6 45.8 1535.6 48.2 V74.4 Q1535.6 76.8 1533.2 76.8 H1503.2 Q1500.6 76.8 1500.6 73.8 V54 Q1500.6 51.4 1503.2 51.4 H1508.5"/>
<line x1="1513.3" y1="53.2" x2="1530.8" y2="53.2" stroke-width="1.7"/><line x1="1513.3" y1="57.3" x2="1530.8" y2="57.3" stroke-width="1.7"/><line x1="1513.3" y1="61.6" x2="1530.8" y2="61.6" stroke-width="1.7"/><line x1="1513.3" y1="65.5" x2="1530.8" y2="65.5" stroke-width="1.7"/><line x1="1513.3" y1="69.8" x2="1530.8" y2="69.8" stroke-width="1.7"/>
<!-- sales -->
<g stroke-width="1.9">
<path d="M1651.8 45 Q1650.5 43 1647.8 43 Q1643.8 43 1643.8 46.4 Q1643.8 49.4 1648 49.6 Q1652.6 49.9 1652.6 53 Q1652.6 56.2 1648.3 56.2 Q1645.2 56.2 1644 54.3"/>
<path d="M1648.2 40.6 V43 M1648.2 56.2 V57.6"/>
<path d="M1637.8 61.2 H1667.5 L1659 68.8 H1628.8 Z"/>
<path d="M1645.5 61.5 L1637 68.5 M1657 61.5 L1648.5 68.5"/>
<path d="M1628.8 68.8 V77 H1659.6 L1667.8 69.5 M1628.8 73 H1637.6 M1649.8 73 H1659.6 L1667.8 65.6"/>
<rect x="1637.6" y="68.8" width="12.2" height="8.2"/>
</g>
<!-- reports -->
<path stroke-width="1.6" d="M1767.5 77.3 H1792.6 V46.2 H1789.8"/>
<rect x="1763.9" y="43.7" width="24.7" height="30.6" stroke-width="1.9"/>
<line x1="1767.5" y1="49" x2="1785.5" y2="49" stroke-width="1.9"/><line x1="1767.5" y1="54.1" x2="1785.5" y2="54.1" stroke-width="1.9"/>
<polyline points="1768,63.6 1773,67.8 1778.2,58.9 1784,62.8" stroke-width="1.3"/>
</g>
<g fill="#fff">
<rect x="476.1" y="36.2" width="11.4" height="5.6" rx="2.8"/><ellipse cx="489.8" cy="51.6" rx="1.7" ry="1.2"/>
<rect x="724" y="43" width="28" height="35" rx="2.8"/>
<rect x="857.6" y="62" width="2.4" height="2.6" fill="#fff"/><rect x="857.6" y="68" width="2.4" height="2.6" fill="#fff"/>
<circle cx="1255" cy="74" r="1.2"/><circle cx="1271.3" cy="43" r="1"/>
<circle cx="1768" cy="63.6" r="1.9"/><circle cx="1773" cy="67.8" r="1.9"/><circle cx="1778.2" cy="58.9" r="1.9"/><circle cx="1784" cy="62.8" r="1.9"/>
<path d="M1879 53.7 L1887.2 65.2 H1882.3 V70.2 H1875.7 V65.2 H1870.8 Z"/>
<rect x="1875.6" y="71.4" width="6.8" height="2" rx="1"/><rect x="1875.6" y="74.8" width="6.8" height="2" rx="1"/><rect x="1875.6" y="78.3" width="6.8" height="2" rx="1"/>
</g>
<rect x="727.3" y="46" width="21.7" height="24.5" fill="#2d2926"/>
<ellipse cx="738" cy="74.3" rx="2" ry="1.3" fill="#2d2926"/>
<!-- events -->
<g fill="none" stroke="#fff" stroke-width="1.25">
<path d="M1125.8 76.7 H1108.3 V41.6 H1143.4 V59"/>
<line x1="1108.3" y1="48.7" x2="1143.4" y2="48.7"/>
<rect x="1111.6" y="38.9" width="5.4" height="5.4" fill="#03703f"/><rect x="1134" y="38.9" width="5.4" height="5.4" fill="#03703f"/>
<path d="M1112.8 53.6 H1139 V58.8 H1112.8 Z M1112.8 58.8 V71.8 H1125.7 V53.6 M1119.2 53.6 V71.8 M1112.8 65.3 H1125.7 M1132.4 53.6 V58.8"/>
<g transform="translate(1131.5 76.5) rotate(-40)">
<path d="M0 0 L5 -2.6 H22.5 Q24 -2.6 24 -1 V1 Q24 2.6 22.5 2.6 H5 Z M5 -2.6 V2.6 M19 -2.6 V2.6"/>
</g>
</g>
</svg>
<svg class="r" style="left:0;top:150px" width="230" height="480" viewBox="0 150 230 480">
<g fill="none" stroke="#fff" stroke-linecap="round" stroke-linejoin="round">
<rect x="22.4" y="171.7" width="29.4" height="19.7" rx="2" stroke-width="1.3"/><line x1="29" y1="170.3" x2="29" y2="173.5" stroke-width="1.2"/><line x1="34.2" y1="170.3" x2="34.2" y2="173.5" stroke-width="1.2"/><line x1="39.3" y1="170.3" x2="39.3" y2="173.5" stroke-width="1.2"/><line x1="44.6" y1="170.3" x2="44.6" y2="173.5" stroke-width="1.2"/><rect x="27.2" y="177.1" width="1.2" height="1.2" fill="#ddd" stroke="none"/><rect x="31.799999999999997" y="177.1" width="1.2" height="1.2" fill="#ddd" stroke="none"/><rect x="36.3" y="177.1" width="1.2" height="1.2" fill="#ddd" stroke="none"/><rect x="40.9" y="177.1" width="1.2" height="1.2" fill="#ddd" stroke="none"/><rect x="45.9" y="177.1" width="1.2" height="1.2" fill="#ddd" stroke="none"/><rect x="27.2" y="181.70000000000002" width="1.2" height="1.2" fill="#ddd" stroke="none"/><rect x="36.3" y="181.70000000000002" width="1.2" height="1.2" fill="#ddd" stroke="none"/><rect x="40.9" y="181.70000000000002" width="1.2" height="1.2" fill="#ddd" stroke="none"/><rect x="45.9" y="181.70000000000002" width="1.2" height="1.2" fill="#ddd" stroke="none"/><rect x="27.2" y="186.20000000000002" width="1.2" height="1.2" fill="#ddd" stroke="none"/><rect x="31.799999999999997" y="186.20000000000002" width="1.2" height="1.2" fill="#ddd" stroke="none"/><rect x="36.3" y="186.20000000000002" width="1.2" height="1.2" fill="#ddd" stroke="none"/><rect x="40.9" y="186.20000000000002" width="1.2" height="1.2" fill="#ddd" stroke="none"/><rect x="45.9" y="186.20000000000002" width="1.2" height="1.2" fill="#ddd" stroke="none"/><rect x="30.3" y="180.2" width="4.2" height="4.2" stroke-width="1.2"/><rect x="22.4" y="535.7" width="29.4" height="19.7" rx="2" stroke-width="1.3"/><line x1="29" y1="534.3" x2="29" y2="537.5" stroke-width="1.2"/><line x1="34.2" y1="534.3" x2="34.2" y2="537.5" stroke-width="1.2"/><line x1="39.3" y1="534.3" x2="39.3" y2="537.5" stroke-width="1.2"/><line x1="44.6" y1="534.3" x2="44.6" y2="537.5" stroke-width="1.2"/><rect x="27.2" y="541.1" width="1.2" height="1.2" fill="#ddd" stroke="none"/><rect x="31.799999999999997" y="541.1" width="1.2" height="1.2" fill="#ddd" stroke="none"/><rect x="36.3" y="541.1" width="1.2" height="1.2" fill="#ddd" stroke="none"/><rect x="40.9" y="541.1" width="1.2" height="1.2" fill="#ddd" stroke="none"/><rect x="45.9" y="541.1" width="1.2" height="1.2" fill="#ddd" stroke="none"/><rect x="27.2" y="545.6999999999999" width="1.2" height="1.2" fill="#ddd" stroke="none"/><rect x="36.3" y="545.6999999999999" width="1.2" height="1.2" fill="#ddd" stroke="none"/><rect x="40.9" y="545.6999999999999" width="1.2" height="1.2" fill="#ddd" stroke="none"/><rect x="45.9" y="545.6999999999999" width="1.2" height="1.2" fill="#ddd" stroke="none"/><rect x="27.2" y="550.1999999999999" width="1.2" height="1.2" fill="#ddd" stroke="none"/><rect x="31.799999999999997" y="550.1999999999999" width="1.2" height="1.2" fill="#ddd" stroke="none"/><rect x="36.3" y="550.1999999999999" width="1.2" height="1.2" fill="#ddd" stroke="none"/><rect x="40.9" y="550.1999999999999" width="1.2" height="1.2" fill="#ddd" stroke="none"/><rect x="45.9" y="550.1999999999999" width="1.2" height="1.2" fill="#ddd" stroke="none"/><rect x="30.3" y="544.2" width="4.2" height="4.2" stroke-width="1.2"/><rect x="23.4" y="430.4" width="28.2" height="24.4" rx="2.2" stroke-width="1.8"/><line x1="23.4" y1="437.2" x2="51.6" y2="437.2" stroke-width="1.8"/><line x1="31.5" y1="427.6" x2="31.5" y2="432" stroke-width="1.7"/><line x1="42.5" y1="427.6" x2="42.5" y2="432" stroke-width="1.7"/><line x1="33.3" y1="443.2" x2="45" y2="443.2" stroke-width="2"/><line x1="33.3" y1="448" x2="45" y2="448" stroke-width="2"/><rect x="27.9" y="442.1" width="2.2" height="2.2" fill="#fff" stroke="none"/><rect x="27.9" y="446.9" width="2.2" height="2.2" fill="#fff" stroke="none"/><rect x="23.4" y="482.4" width="28.2" height="24.4" rx="2.2" stroke-width="1.8"/><line x1="23.4" y1="489.2" x2="51.6" y2="489.2" stroke-width="1.8"/><line x1="31.5" y1="479.6" x2="31.5" y2="484" stroke-width="1.7"/><line x1="42.5" y1="479.6" x2="42.5" y2="484" stroke-width="1.7"/><line x1="33.3" y1="495.2" x2="45" y2="495.2" stroke-width="2"/><line x1="33.3" y1="500" x2="45" y2="500" stroke-width="2"/><rect x="27.9" y="494.1" width="2.2" height="2.2" fill="#fff" stroke="none"/><rect x="27.9" y="498.9" width="2.2" height="2.2" fill="#fff" stroke="none"/><g transform="translate(0 0)" stroke-width="1.15">
<path d="M22.8 344.8 L37.2 330.2 Q39.5 328.6 41.5 330.4 L44.2 333.2 Q46 335.6 44.2 337.8 L29.6 350.6 Q28 351.8 26.6 350.4 Z"/>
<path d="M24.2 346.6 L28.6 349.4" stroke-width="1"/>
<path d="M31.3 344.6 L37.6 338.8 Q38.8 338 39.4 339 Q39.8 339.8 38.8 340.8 L32.6 346.4 Q31.6 347 31 346.2 Q30.6 345.4 31.3 344.6 Z" stroke-width="1"/>
<path d="M36.6 331 L39.6 328.2 L42.8 331.6 L40 334.2"/>
<path d="M40.6 329.2 L46.2 325.8 M42.6 331.6 L45 330.4"/>
<ellipse cx="49.1" cy="325.4" rx="2.9" ry="1.9" transform="rotate(-25 49.1 325.4)"/>
<ellipse cx="47.5" cy="330.8" rx="2.7" ry="1.8" transform="rotate(-15 47.5 330.8)"/>
</g><g transform="translate(0 52)" stroke-width="1.15">
<path d="M22.8 344.8 L37.2 330.2 Q39.5 328.6 41.5 330.4 L44.2 333.2 Q46 335.6 44.2 337.8 L29.6 350.6 Q28 351.8 26.6 350.4 Z"/>
<path d="M24.2 346.6 L28.6 349.4" stroke-width="1"/>
<path d="M31.3 344.6 L37.6 338.8 Q38.8 338 39.4 339 Q39.8 339.8 38.8 340.8 L32.6 346.4 Q31.6 347 31 346.2 Q30.6 345.4 31.3 344.6 Z" stroke-width="1"/>
<path d="M36.6 331 L39.6 328.2 L42.8 331.6 L40 334.2"/>
<path d="M40.6 329.2 L46.2 325.8 M42.6 331.6 L45 330.4"/>
<ellipse cx="49.1" cy="325.4" rx="2.9" ry="1.9" transform="rotate(-25 49.1 325.4)"/>
<ellipse cx="47.5" cy="330.8" rx="2.7" ry="1.8" transform="rotate(-15 47.5 330.8)"/>
</g><g stroke-width="1.8">
<path d="M48.35 231.82 A12.4 12.4 0 1 1 41.82 221.95"/>
</g>
<g stroke-width="1.6">
<path d="M32.6 221.2 Q28.6 233 32.4 245.2"/>
<path d="M41.2 236.6 Q41 241.6 38.8 245"/>
<path d="M24.6 228.8 Q30 227.2 36.6 227.5"/>
<path d="M23.8 237.3 Q36 241.2 48.4 236.4"/>
</g>
<path d="M37 227.8 L44.4 220.2 L49.4 227.8 Z" stroke-width="1.5"/>
<path d="M37 227.8 L40.6 227.8 L42.8 233.6 L41 234 Z" fill="#fff" stroke-width="1"/>
<path d="M47.4 221.6 Q49.4 222.3 50 224.4 M47.8 219.2 Q51.3 220.3 51.8 224.6" stroke-width="1"/>
<!-- banquet -->
<g fill="#fff" stroke="none">
<path fill-rule="evenodd" d="M26 274 H48 Q51 274 51 277 V296 Q51 299 48 299 H26 Q23 299 23 296 V277 Q23 274 26 274 Z M26.2 280.9 V295.8 H47.8 V280.9 Z"/>
<rect x="28.9" y="271" width="2.6" height="5" rx="1.2"/><rect x="42.5" y="271" width="2.6" height="5" rx="1.2"/>
<path d="M37 282.4 L38.5 285.7 L42.2 286 L39.4 288.4 L40.3 292 L37 290.1 L33.7 292 L34.6 288.4 L31.8 286 L35.5 285.7 Z" stroke="#fff" stroke-width="0.8" stroke-linejoin="round"/>
</g>
<!-- camera -->
<g stroke-width="1.4">
<rect x="22.6" y="592.5" width="22" height="14" rx="2"/>
<line x1="23" y1="602.8" x2="44.2" y2="602.8" stroke-width="1.2"/>
<path d="M26.4 592.3 L28.5 587.4 H41 V592.3"/>
<path d="M45 597.8 L52 592.6 V606.3 Z"/>
</g>
</g></svg>
<svg class="r" style="left:0;top:0" width="1919" height="400" viewBox="0 0 1919 400">
<defs><filter id="sh" x="-50%" y="-50%" width="200%" height="200%"><feGaussianBlur in="SourceAlpha" stdDeviation="1.6"/><feOffset dx="1" dy="2" result="b"/><feComponentTransfer><feFuncA type="linear" slope="0.45"/></feComponentTransfer><feMerge><feMergeNode/><feMergeNode in="SourceGraphic"/></feMerge></filter></defs>
<g filter="url(#sh)" fill="#fc4343">
<path d="M1104 126 L1078.2 133.2 L1083.4 139.4 L1067.3 153.6 Q1066 157.5 1069 159.2 Q1071.5 160 1073.5 158.4 L1089.2 145.5 L1094.9 150.8 Z"/>
<path d="M188.2 321.4 L185 295.8 L192.3 298.2 L206.3 265.2 Q208.5 262 211.2 263.6 Q213.6 265.3 212.3 268.5 L200.3 301 L207.4 303.4 Z"/>
</g></svg>
</body></html>
